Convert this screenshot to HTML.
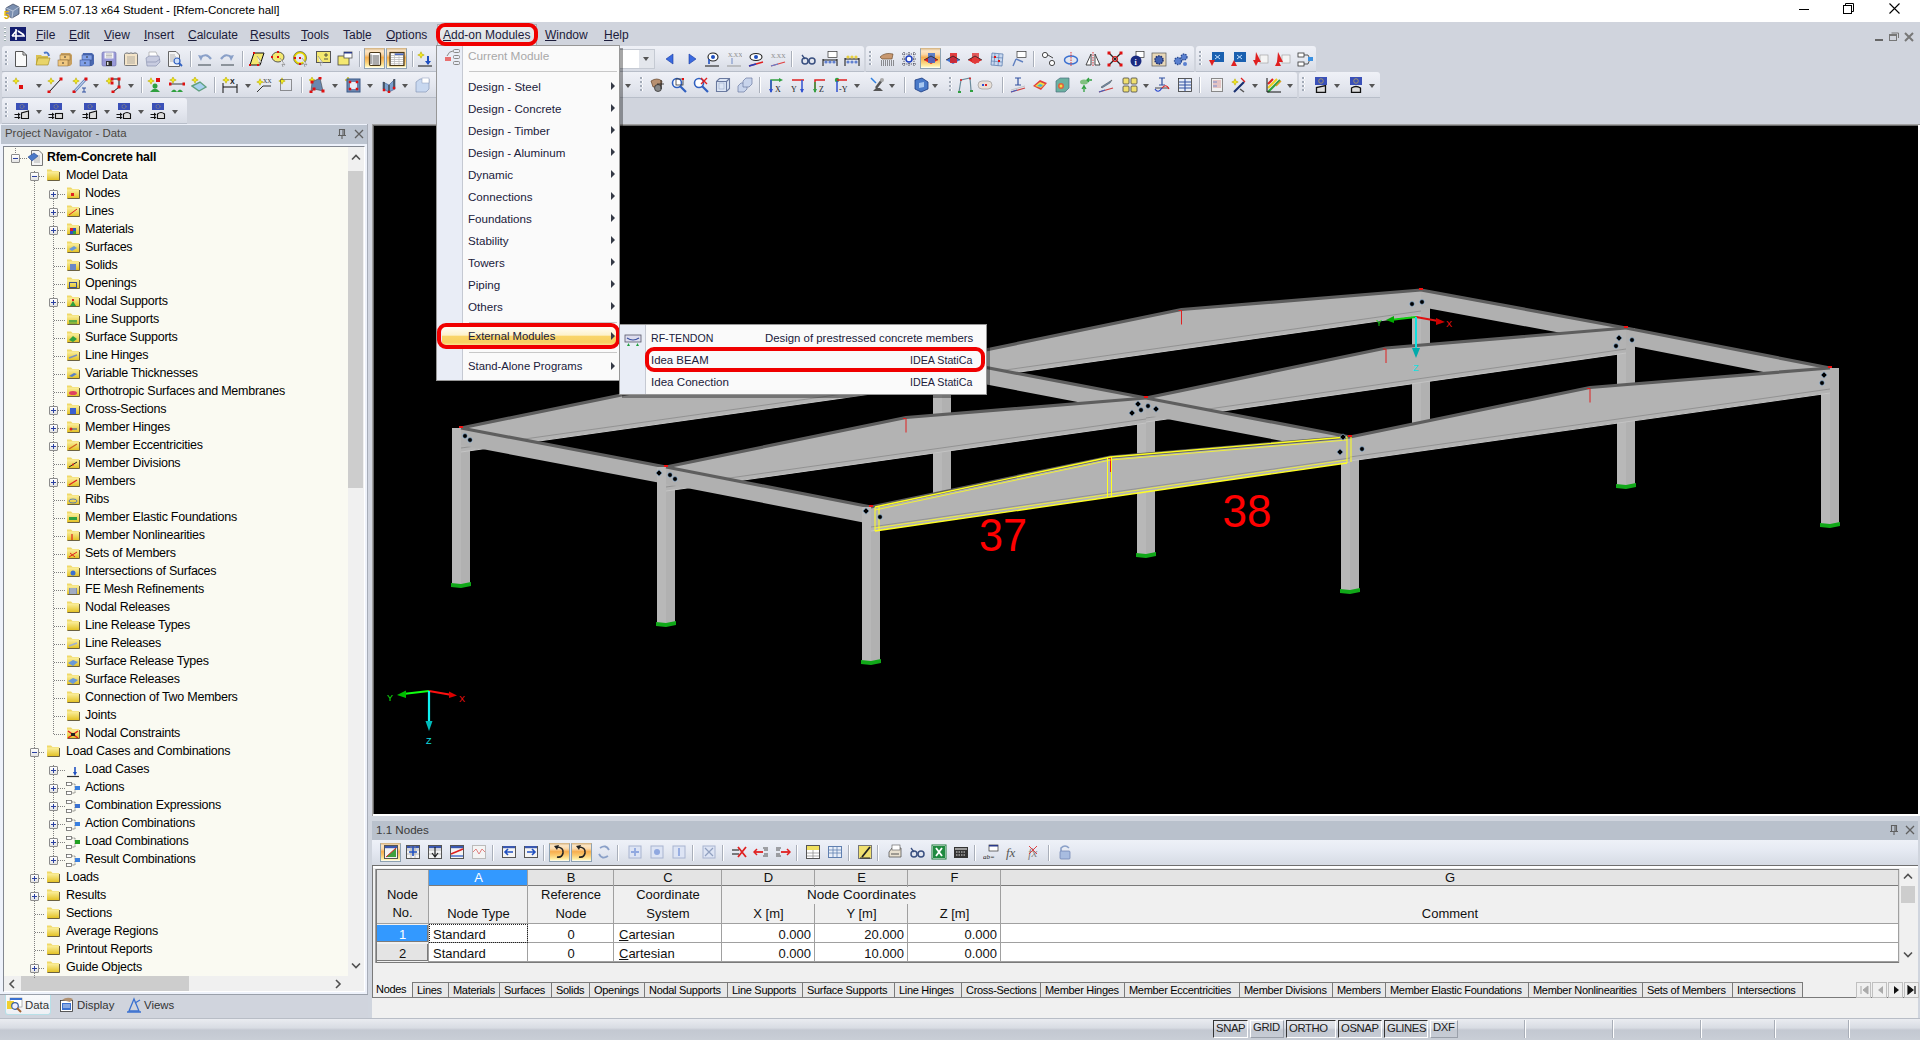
<!DOCTYPE html><html><head><meta charset="utf-8"><style>
*{margin:0;padding:0;box-sizing:border-box}
html,body{width:1920px;height:1040px;overflow:hidden;background:#d0d4dd;font-family:"Liberation Sans", sans-serif;font-size:12px;color:#1e1e1e}
.a{position:absolute}
.t{position:absolute;white-space:pre;line-height:1}
</style></head><body>

<div class="a" style="left:0;top:0;width:1920px;height:22px;background:#fff"></div>
<svg class="a" style="left:3px;top:2px" width="18" height="18" viewBox="0 0 18 18">
<path d="M3 6 L10 2 L16 5 L16 12 L9 16 L3 13Z" fill="#7a8fb0" stroke="#44506a" stroke-width="0.8"/>
<path d="M3 6 L10 9 L16 5 M10 9 L9 16" stroke="#c8d2e2" stroke-width="0.8" fill="none"/>
<text x="1" y="17" font-family="Liberation Sans" font-weight="bold" font-size="10" fill="#e0b000">5</text></svg>
<div class="t" style="left:23px;top:4px;font-size:11.6px;color:#000">RFEM 5.07.13 x64 Student - [Rfem-Concrete hall]</div>
<div class="a" style="left:1799px;top:9px;width:10px;height:1px;background:#000"></div>
<svg class="a" style="left:1843px;top:3px" width="12" height="12" viewBox="0 0 12 12"><rect x="0.5" y="2.5" width="8" height="8" fill="none" stroke="#000"/><path d="M2.5 2.5 V0.5 H10.5 V8.5 H8.5" fill="none" stroke="#000"/></svg>
<svg class="a" style="left:1889px;top:3px" width="12" height="12" viewBox="0 0 12 12"><path d="M0.5 0.5 L10.5 10.5 M10.5 0.5 L0.5 10.5" stroke="#000" stroke-width="1.1"/></svg>
<div class="a" style="left:0;top:22px;width:1920px;height:24px;background:#d0d4dd"></div>
<div class="a" style="left:4px;top:27px;width:2px;height:14px;background:repeating-linear-gradient(#fff 0 1px,#9aa 1px 2px,transparent 2px 4px)"></div>
<svg class="a" style="left:10px;top:27px" width="16" height="14" viewBox="0 0 16 14"><rect width="16" height="14" fill="#141e6e"/><path d="M2 9 H15 M6 2 V13 M2 9 L7 3 M8 4 L14 8" stroke="#fff" stroke-width="1.6"/></svg>
<div class="a" style="left:437px;top:24px;width:100px;height:22px;background:linear-gradient(#eceef0,#dcdfe3);border:1px solid #a8aeb6;border-bottom:none"></div>
<div class="t" style="left:36px;top:29px;font-size:12px;color:#1b1b3a"><span style="text-decoration:underline">F</span>ile</div>
<div class="t" style="left:69px;top:29px;font-size:12px;color:#1b1b3a"><span style="text-decoration:underline">E</span>dit</div>
<div class="t" style="left:104px;top:29px;font-size:12px;color:#1b1b3a"><span style="text-decoration:underline">V</span>iew</div>
<div class="t" style="left:144px;top:29px;font-size:12px;color:#1b1b3a"><span style="text-decoration:underline">I</span>nsert</div>
<div class="t" style="left:188px;top:29px;font-size:12px;color:#1b1b3a"><span style="text-decoration:underline">C</span>alculate</div>
<div class="t" style="left:250px;top:29px;font-size:12px;color:#1b1b3a"><span style="text-decoration:underline">R</span>esults</div>
<div class="t" style="left:301px;top:29px;font-size:12px;color:#1b1b3a"><span style="text-decoration:underline">T</span>ools</div>
<div class="t" style="left:343px;top:29px;font-size:12px;color:#1b1b3a">Tab<span style="text-decoration:underline">l</span>e</div>
<div class="t" style="left:386px;top:29px;font-size:12px;color:#1b1b3a"><span style="text-decoration:underline">O</span>ptions</div>
<div class="t" style="left:443px;top:29px;font-size:12px;color:#1b1b3a"><span style="text-decoration:underline">A</span>dd-on Modules</div>
<div class="t" style="left:545px;top:29px;font-size:12px;color:#1b1b3a"><span style="text-decoration:underline">W</span>indow</div>
<div class="t" style="left:604px;top:29px;font-size:12px;color:#1b1b3a"><span style="text-decoration:underline">H</span>elp</div>
<div class="a" style="left:1875px;top:39px;width:8px;height:2px;background:#666"></div>
<svg class="a" style="left:1889px;top:32px" width="10" height="9" viewBox="0 0 10 9"><rect x="0.5" y="2.5" width="7" height="6" fill="none" stroke="#777"/><rect x="0.5" y="2" width="7" height="2" fill="#777"/><path d="M2.5 1 H9.5 V6" fill="none" stroke="#777"/></svg>
<svg class="a" style="left:1904px;top:32px" width="10" height="10" viewBox="0 0 10 10"><path d="M1 1 L9 9 M9 1 L1 9" stroke="#777" stroke-width="2"/></svg>
<div class="a" style="left:2px;top:46px;width:862px;height:26px;background:linear-gradient(#eff1f7,#e4e7ef 55%,#d8dce5);border-bottom:1px solid #b8bec9;border-radius:3px 3px 0 0"></div>
<div class="a" style="left:866px;top:46px;width:328px;height:26px;background:linear-gradient(#eff1f7,#e4e7ef 55%,#d8dce5);border-bottom:1px solid #b8bec9;border-radius:3px 3px 0 0"></div>
<div class="a" style="left:1196px;top:46px;width:120px;height:26px;background:linear-gradient(#eff1f7,#e4e7ef 55%,#d8dce5);border-bottom:1px solid #b8bec9;border-radius:3px 3px 0 0"></div>
<div class="a" style="left:2px;top:72px;width:1295px;height:26px;background:linear-gradient(#eff1f7,#e4e7ef 55%,#d8dce5);border-bottom:1px solid #b8bec9;border-radius:3px 3px 0 0"></div>
<div class="a" style="left:1299px;top:72px;width:81px;height:26px;background:linear-gradient(#eff1f7,#e4e7ef 55%,#d8dce5);border-bottom:1px solid #b8bec9;border-radius:3px 3px 0 0"></div>
<div class="a" style="left:2px;top:98px;width:185px;height:26px;background:linear-gradient(#eff1f7,#e4e7ef 55%,#d8dce5);border-bottom:1px solid #b8bec9;border-radius:3px 3px 0 0"></div>
<div class="a" style="left:5px;top:51px;width:3px;height:16px;background:linear-gradient(90deg,#a3abb8 0 2px,#fff 2px 3px);-webkit-mask:repeating-linear-gradient(#000 0 2px,transparent 2px 4px);mask:repeating-linear-gradient(#000 0 2px,transparent 2px 4px)"></div>
<div class="a" style="left:190px;top:51px;width:1px;height:16px;background:#a9afba;box-shadow:1px 0 0 #fff"></div>
<div class="a" style="left:242px;top:51px;width:1px;height:16px;background:#a9afba;box-shadow:1px 0 0 #fff"></div>
<div class="a" style="left:359px;top:51px;width:1px;height:16px;background:#a9afba;box-shadow:1px 0 0 #fff"></div>
<div class="a" style="left:412px;top:51px;width:1px;height:16px;background:#a9afba;box-shadow:1px 0 0 #fff"></div>
<div class="a" style="left:364px;top:48px;width:21px;height:21px;background:linear-gradient(#e2c49a 0,#fde6c4 10%,#fbd8a8 28%,#f7ae4e 45%,#fbcc72 68%,#fff0a8 90%,#ffffff 100%);border:1px solid #8ea2b2;border-top-color:#d8b888"></div>
<div class="a" style="left:386px;top:48px;width:21px;height:21px;background:linear-gradient(#e2c49a 0,#fde6c4 10%,#fbd8a8 28%,#f7ae4e 45%,#fbcc72 68%,#fff0a8 90%,#ffffff 100%);border:1px solid #8ea2b2;border-top-color:#d8b888"></div>
<div class="a" style="left:600px;top:49px;width:55px;height:20px;background:#fff;border:1px solid #c5cad3"></div>
<div class="a" style="left:639px;top:50px;width:15px;height:18px;background:#e3e6ec"></div>
<div class="a" style="left:643px;top:57px;width:0;height:0;border-left:3.5px solid transparent;border-right:3.5px solid transparent;border-top:4px solid #555"></div>
<div class="a" style="left:791px;top:51px;width:1px;height:16px;background:#a9afba;box-shadow:1px 0 0 #fff"></div>
<div class="a" style="left:869px;top:51px;width:3px;height:16px;background:linear-gradient(90deg,#a3abb8 0 2px,#fff 2px 3px);-webkit-mask:repeating-linear-gradient(#000 0 2px,transparent 2px 4px);mask:repeating-linear-gradient(#000 0 2px,transparent 2px 4px)"></div>
<div class="a" style="left:920px;top:48px;width:21px;height:21px;background:linear-gradient(#e2c49a 0,#fde6c4 10%,#fbd8a8 28%,#f7ae4e 45%,#fbcc72 68%,#fff0a8 90%,#ffffff 100%);border:1px solid #8ea2b2;border-top-color:#d8b888"></div>
<div class="a" style="left:1033px;top:51px;width:1px;height:16px;background:#a9afba;box-shadow:1px 0 0 #fff"></div>
<div class="a" style="left:1199px;top:51px;width:3px;height:16px;background:linear-gradient(90deg,#a3abb8 0 2px,#fff 2px 3px);-webkit-mask:repeating-linear-gradient(#000 0 2px,transparent 2px 4px);mask:repeating-linear-gradient(#000 0 2px,transparent 2px 4px)"></div>
<svg class="a" style="left:13px;top:51px" width="16" height="16" viewBox="0 0 16 16"><path d="M2.5 0.5 H10 L13.5 4 V15.5 H2.5Z" fill="#fafafa" stroke="#555"/><path d="M10 0.5 V4 H13.5" fill="none" stroke="#555"/></svg>
<svg class="a" style="left:35px;top:51px" width="16" height="16" viewBox="0 0 16 16"><path d="M1 4 H6 L7 5 H13 V14 H1Z" fill="#d9c050"/><path d="M1 14 L3 7 H15 L13 14Z" fill="#e8d46a" stroke="#9a8420" stroke-width="0.6"/><path d="M9 2 Q13 0 14 5" stroke="#4a78c8" stroke-width="2" fill="none"/></svg>
<svg class="a" style="left:57px;top:51px" width="16" height="16" viewBox="0 0 16 16"><path d="M4 2 H13 L15 4 V13 L13 15 H3 V6Z" fill="#c8a060"/><rect x="3" y="4" width="10" height="5" fill="#f0c880" stroke="#806030" stroke-width="0.5"/><rect x="1" y="9" width="10" height="6" fill="#f0c880" stroke="#806030" stroke-width="0.5"/><circle cx="8" cy="6" r="0.8" fill="#222"/><circle cx="6" cy="12" r="0.8" fill="#222"/></svg>
<svg class="a" style="left:79px;top:51px" width="16" height="16" viewBox="0 0 16 16"><path d="M4 2 H13 L15 4 V13 L13 15 H3 V6Z" fill="#4a68b0"/><rect x="3" y="4" width="10" height="5" fill="#80a0e8" stroke="#304888" stroke-width="0.5"/><rect x="1" y="9" width="10" height="6" fill="#80a0e8" stroke="#304888" stroke-width="0.5"/><circle cx="8" cy="6" r="0.8" fill="#222"/><circle cx="6" cy="12" r="0.8" fill="#222"/></svg>
<svg class="a" style="left:101px;top:51px" width="16" height="16" viewBox="0 0 16 16"><rect x="1" y="1" width="14" height="14" rx="1.5" fill="#9a9ad8" stroke="#6a6aa8" stroke-width="0.6"/><rect x="3.5" y="1.5" width="9" height="6" fill="#f4f4f4"/><path d="M5 3 H11 M5 4.5 H11 M5 6 H11" stroke="#888" stroke-width="0.5"/><rect x="5" y="10" width="6" height="5" fill="#333"/><rect x="6" y="11" width="1.5" height="3" fill="#ddd"/></svg>
<svg class="a" style="left:123px;top:51px" width="16" height="16" viewBox="0 0 16 16"><rect x="1.5" y="2.5" width="13" height="12" rx="1" fill="#f4e4c8" stroke="#777"/><path d="M2 2.5 Q4 0.5 6 2.5 Q8 0.5 10 2.5 Q12 0.5 14 2.5" fill="#ddd" stroke="#777" stroke-width="0.6"/><path d="M4 6 H12 M4 8 H12 M4 10 H12 M4 12 H12" stroke="#888" stroke-width="0.6"/></svg>
<svg class="a" style="left:145px;top:51px" width="16" height="16" viewBox="0 0 16 16"><path d="M4 1 H11 L13 6 H4Z" fill="#fff" stroke="#999" stroke-width="0.6"/><path d="M1 7 L4 5 H14 L15 11 L11 15 H2Z" fill="#c8cce0" stroke="#8088a8" stroke-width="0.6"/><path d="M2 11 H11 L15 8" stroke="#8088a8" stroke-width="0.6" fill="none"/></svg>
<svg class="a" style="left:167px;top:51px" width="16" height="16" viewBox="0 0 16 16"><path d="M1.5 0.5 H9 L12.5 4 V15.5 H1.5Z" fill="#f4f4f4" stroke="#666"/><path d="M3 4 H8 M3 6 H9 M3 8 H7 M3 10 H6" stroke="#888" stroke-width="0.6"/><circle cx="10" cy="10" r="3" fill="#cfe0f8" stroke="#3060c0" stroke-width="1.2"/><path d="M12 12 L15 15" stroke="#3060c0" stroke-width="1.8"/></svg>
<svg class="a" style="left:197px;top:51px" width="16" height="16" viewBox="0 0 16 16"><path d="M3 7 Q9 1 14 8" stroke="#8aa0c8" stroke-width="2.2" fill="none"/><path d="M1 4 L4 10 L6 5Z" fill="#8aa0c8"/><path d="M1 14 H14" stroke="#707880" stroke-width="1.5"/></svg>
<svg class="a" style="left:219px;top:51px" width="16" height="16" viewBox="0 0 16 16"><path d="M13 7 Q7 1 2 8" stroke="#8aa0c8" stroke-width="2.2" fill="none"/><path d="M15 4 L12 10 L10 5Z" fill="#8aa0c8"/><path d="M2 14 H15" stroke="#707880" stroke-width="1.5"/></svg>
<svg class="a" style="left:249px;top:51px" width="16" height="16" viewBox="0 0 16 16"><path d="M1 14 L5 2 H15 L11 14Z" fill="#f4e870" stroke="#111" stroke-width="1"/><rect x="4.0" y="1.0" width="2" height="2" fill="#e01010"/><rect x="0.0" y="13.0" width="2" height="2" fill="#e01010"/><rect x="8.0" y="13.0" width="2" height="2" fill="#e01010"/><path d="M8 5 L13 12 L10 11 L11 15" fill="#eee" stroke="#777" stroke-width="0.6"/></svg>
<svg class="a" style="left:271px;top:51px" width="16" height="16" viewBox="0 0 16 16"><ellipse cx="7" cy="6" rx="6" ry="5" fill="#f4e870" stroke="#333" stroke-width="0.8"/><rect x="0.0" y="5.0" width="2" height="2" fill="#e01010"/><rect x="6.0" y="0.0" width="2" height="2" fill="#e01010"/><rect x="6.0" y="5.0" width="2" height="2" fill="#e01010"/><path d="M9 7 L14 14 L11 13 L12 16" fill="#eee" stroke="#777" stroke-width="0.6"/></svg>
<svg class="a" style="left:293px;top:51px" width="16" height="16" viewBox="0 0 16 16"><circle cx="7" cy="7" r="5.5" fill="none" stroke="#e8d800" stroke-width="2"/><circle cx="7" cy="7" r="6.5" fill="none" stroke="#222" stroke-width="0.5"/><rect x="6.0" y="6.0" width="2" height="2" fill="#e01010"/><rect x="1.0" y="6.0" width="2" height="2" fill="#e01010"/><rect x="6.0" y="12.0" width="2" height="2" fill="#e01010"/><path d="M9 7 L14 14 L11 13 L12 16" fill="#eee" stroke="#777" stroke-width="0.6"/></svg>
<svg class="a" style="left:315px;top:51px" width="16" height="16" viewBox="0 0 16 16"><rect x="1.5" y="0.5" width="14" height="11" fill="#f4e870" stroke="#555"/><path d="M9 4 H13 M11 2 V6 M9 8 H13" stroke="#333" stroke-width="0.8"/><path d="M3 5 L8 12 L5 11 L6 15" fill="#eee" stroke="#777" stroke-width="0.6"/></svg>
<svg class="a" style="left:337px;top:51px" width="16" height="16" viewBox="0 0 16 16"><rect x="1" y="5" width="11" height="9" fill="#f4e870" stroke="#444" stroke-width="0.8"/><rect x="7" y="1" width="8" height="6" fill="#fff" stroke="#555" stroke-width="0.8"/><rect x="7" y="1" width="8" height="1.5" fill="#2a3a8a"/></svg>
<svg class="a" style="left:367px;top:51px" width="16" height="16" viewBox="0 0 16 16"><rect x="2.5" y="1.5" width="11" height="13" rx="1.2" fill="#fff" stroke="#4a3818" stroke-width="1.2"/><path d="M5.5 5 H12 M5.5 7 H12 M5.5 9 H12 M5.5 11 H12 M5.5 13 H12" stroke="#444" stroke-width="0.9"/><path d="M4 3.5 V13" stroke="#333" stroke-width="0.8"/></svg>
<svg class="a" style="left:389px;top:51px" width="16" height="16" viewBox="0 0 16 16"><rect x="1" y="1.5" width="14" height="13" fill="#c8c8c8" stroke="#4a3818" stroke-width="1.2"/><rect x="2" y="2.5" width="3" height="1.5" fill="#fff"/><rect x="6" y="2.5" width="8.5" height="1.5" fill="#4a68c0"/><path d="M2 5.5 H14 M2 7.5 H14 M2 9.5 H14 M2 11.5 H14 M2 13.3 H14" stroke="#fff" stroke-width="1"/><path d="M5.5 5 V14 M10 5 V14" stroke="#bbb" stroke-width="0.7"/></svg>
<svg class="a" style="left:417px;top:51px" width="16" height="16" viewBox="0 0 16 16"><path d="M4 0.7999999999999998 L4.9 3.1 L7.2 4 L4.9 4.9 L4 7.2 L3.1 4.9 L0.7999999999999998 4 L3.1 3.1Z" fill="#f6f020" stroke="#b8a800" stroke-width="0.6"/><path d="M11 5 V13" stroke="#2050c0" stroke-width="2"/><path d="M8 10 L11 14 L14 10Z" fill="#2050c0"/><path d="M1 15 H15" stroke="#333" stroke-width="1.2"/></svg>
<svg class="a" style="left:662px;top:51px" width="16" height="16" viewBox="0 0 16 16"><path d="M11 3 L4 8 L11 13Z" fill="#3a6ae0" stroke="#1a3aa0" stroke-width="0.6"/></svg>
<svg class="a" style="left:684px;top:51px" width="16" height="16" viewBox="0 0 16 16"><path d="M5 3 L12 8 L5 13Z" fill="#3a6ae0" stroke="#1a3aa0" stroke-width="0.6"/></svg>
<svg class="a" style="left:704px;top:51px" width="16" height="16" viewBox="0 0 16 16"><ellipse cx="9" cy="6" rx="5" ry="4" fill="#fff" stroke="#222" stroke-width="1.1"/><circle cx="9" cy="6" r="2" fill="#2050c0"/><path d="M5 8 V13" stroke="#2050c0" stroke-width="1.6"/><path d="M1 15 H15" stroke="#333" stroke-width="1.2"/></svg>
<svg class="a" style="left:726px;top:51px" width="16" height="16" viewBox="0 0 16 16"><text x="2" y="6" font-size="6" fill="#888" font-family="Liberation Serif">X.XX</text><path d="M6 7 V13" stroke="#8aa0d0" stroke-width="1.3"/><path d="M1 15 H15" stroke="#999" stroke-width="1"/></svg>
<svg class="a" style="left:748px;top:51px" width="16" height="16" viewBox="0 0 16 16"><ellipse cx="8" cy="6" rx="6" ry="3.5" fill="#fff" stroke="#222" stroke-width="1.1"/><circle cx="8" cy="6" r="2" fill="#2050c0"/><path d="M1 15 L15 11" stroke="#e02020" stroke-width="1.5"/><path d="M1 15 L8 13" stroke="#2040c0" stroke-width="1.5"/></svg>
<svg class="a" style="left:770px;top:51px" width="16" height="16" viewBox="0 0 16 16"><text x="1" y="7" font-size="6" fill="#888" font-family="Liberation Serif">X.XX</text><path d="M1 15 L15 11" stroke="#e04040" stroke-width="1.2"/><path d="M1 15 L8 13" stroke="#6080d0" stroke-width="1.2"/></svg>
<svg class="a" style="left:800px;top:51px" width="16" height="16" viewBox="0 0 16 16"><circle cx="5" cy="10" r="3" fill="none" stroke="#3a5080" stroke-width="1.5"/><circle cx="12" cy="10" r="3" fill="none" stroke="#3a5080" stroke-width="1.5"/><path d="M2 4 L5 8 M8 10 H9" stroke="#3a5080" stroke-width="1.3"/></svg>
<svg class="a" style="left:822px;top:51px" width="16" height="16" viewBox="0 0 16 16"><rect x="6" y="0.5" width="9" height="6" fill="#fff" stroke="#333" stroke-width="0.7"/><path d="M1 9 H15 M1 8 V15 M15 8 V15" stroke="#111" stroke-width="1"/><circle cx="4" cy="11" r="1.6" fill="#6080d0"/><circle cx="8" cy="11" r="1.6" fill="#6080d0"/><circle cx="12" cy="11" r="1.6" fill="#6080d0"/></svg>
<svg class="a" style="left:844px;top:51px" width="16" height="16" viewBox="0 0 16 16"><path d="M1 8 H15 M1 7 V15 M15 7 V15" stroke="#111" stroke-width="1"/><circle cx="4" cy="6" r="1.6" fill="#e8d040"/><circle cx="8" cy="6" r="1.6" fill="#e8d040"/><circle cx="12" cy="6" r="1.6" fill="#e8d040"/><circle cx="4" cy="11" r="1.6" fill="#6080d0"/><circle cx="8" cy="11" r="1.6" fill="#6080d0"/><circle cx="12" cy="11" r="1.6" fill="#6080d0"/></svg>
<svg class="a" style="left:879px;top:51px" width="16" height="16" viewBox="0 0 16 16"><path d="M1 6 Q6 1 14 3 L13 8 H3Z" fill="#c89870" stroke="#604020" stroke-width="0.6"/><path d="M2 10 H15 M2 12 H15 M2 14 H15" stroke="#333" stroke-width="1" stroke-dasharray="1 1"/></svg>
<svg class="a" style="left:901px;top:51px" width="16" height="16" viewBox="0 0 16 16"><path d="M1 3 H15 M1 8 H15 M1 13 H15 M3 1 V15 M8 1 V15 M13 1 V15" stroke="#223" stroke-width="0.9" stroke-dasharray="1 1.2"/><circle cx="8" cy="8" r="3" fill="#fff" stroke="#2040c0" stroke-width="1.5"/></svg>
<svg class="a" style="left:923px;top:51px" width="16" height="16" viewBox="0 0 16 16"><path d="M1 9 L8 5 L15 9 L8 13Z" fill="#e02020"/><path d="M5 2 H12 V12 H5Z" fill="#4070d0" opacity="0.85"/><path d="M1 9 L8 5 L15 9" stroke="#222" stroke-width="0.8" fill="none"/></svg>
<svg class="a" style="left:945px;top:51px" width="16" height="16" viewBox="0 0 16 16"><path d="M1 9 L8 5 L15 9 L8 13Z" fill="#4070d0"/><path d="M5 2 H12 V12 H5Z" fill="#e02020" opacity="0.85"/><path d="M1 9 L8 5 L15 9" stroke="#222" stroke-width="0.8" fill="none"/></svg>
<svg class="a" style="left:967px;top:51px" width="16" height="16" viewBox="0 0 16 16"><path d="M1 9 L8 5 L15 9 L8 13Z" fill="#e02020"/><path d="M5 2 H12 V12 H5Z" fill="#e04040" opacity="0.85"/><path d="M1 9 L8 5 L15 9" stroke="#222" stroke-width="0.8" fill="none"/></svg>
<svg class="a" style="left:989px;top:51px" width="16" height="16" viewBox="0 0 16 16"><path d="M3 2 L14 3 L13 15 L2 14Z" fill="#c8d8f0" stroke="#6080b0" stroke-width="0.8"/><path d="M6 2 L5 14 M10 3 L9 15 M2 6 L14 7 M2 10 L13 11" stroke="#6080b0" stroke-width="0.7"/><rect x="5.0" y="5.0" width="2" height="2" fill="#e01010"/><rect x="9.0" y="9.0" width="2" height="2" fill="#e01010"/></svg>
<svg class="a" style="left:1011px;top:51px" width="16" height="16" viewBox="0 0 16 16"><rect x="6" y="0.5" width="9" height="6" fill="#fff" stroke="#333" stroke-width="0.7"/><path d="M5 8 L2 15 M5 8 L12 11" stroke="#6080c0" stroke-width="1.4"/></svg>
<svg class="a" style="left:1041px;top:51px" width="16" height="16" viewBox="0 0 16 16"><circle cx="4" cy="4" r="2.6" fill="#fff" stroke="#333" stroke-width="0.9"/><circle cx="11" cy="12" r="2.6" fill="#fff" stroke="#333" stroke-width="0.9"/><path d="M7 4 L12 7" stroke="#333" stroke-width="0.9"/></svg>
<svg class="a" style="left:1063px;top:51px" width="16" height="16" viewBox="0 0 16 16"><ellipse cx="8" cy="9" rx="6.5" ry="4" fill="none" stroke="#3a70d0" stroke-width="1.5"/><path d="M8 1 V16" stroke="#e02020" stroke-width="0.9" stroke-dasharray="1.5 1"/></svg>
<svg class="a" style="left:1085px;top:51px" width="16" height="16" viewBox="0 0 16 16"><path d="M1 14 L6 3 V14Z M15 14 L10 3 V14Z" fill="#fff" stroke="#333" stroke-width="0.9"/><path d="M8 1 V16" stroke="#e02020" stroke-width="0.9" stroke-dasharray="1.5 1"/></svg>
<svg class="a" style="left:1107px;top:51px" width="16" height="16" viewBox="0 0 16 16"><path d="M2 2 L14 14 M14 2 L2 14" stroke="#222" stroke-width="1.3"/><circle cx="8" cy="8" r="2.5" fill="none" stroke="#e02020" stroke-width="1.2"/><rect x="0.5" y="0.5" width="3" height="3" fill="#e01010"/><rect x="12.5" y="0.5" width="3" height="3" fill="#e01010"/><rect x="0.5" y="12.5" width="3" height="3" fill="#e01010"/><rect x="12.5" y="12.5" width="3" height="3" fill="#e01010"/></svg>
<svg class="a" style="left:1129px;top:51px" width="16" height="16" viewBox="0 0 16 16"><rect x="7" y="0.5" width="8" height="6" fill="#fff" stroke="#333" stroke-width="0.7"/><circle cx="7" cy="10" r="5.5" fill="#1a2a80"/><text x="5.6" y="13.5" font-size="8" font-weight="bold" fill="#fff" font-family="Liberation Serif">i</text></svg>
<svg class="a" style="left:1151px;top:51px" width="16" height="16" viewBox="0 0 16 16"><rect x="1" y="2" width="14" height="13" fill="#e8d8b8" stroke="#555" stroke-width="0.7"/><circle cx="8" cy="9" r="4" fill="#4060b0" stroke="#203070" stroke-width="1.6" stroke-dasharray="1.5 1"/></svg>
<svg class="a" style="left:1173px;top:51px" width="16" height="16" viewBox="0 0 16 16"><circle cx="5" cy="10" r="3.5" fill="#5a80d0" stroke="#2a4a90" stroke-width="1.3" stroke-dasharray="1.5 1"/><circle cx="11" cy="6" r="3" fill="#5a80d0" stroke="#2a4a90" stroke-width="1.3" stroke-dasharray="1.5 1"/><circle cx="12" cy="13" r="2" fill="#5a80d0"/></svg>
<svg class="a" style="left:1209px;top:51px" width="16" height="16" viewBox="0 0 16 16"><rect x="3" y="1" width="12" height="10" fill="#1a60b0"/><path d="M6 4 L11 8 M11 4 L6 8" stroke="#c0e0ff" stroke-width="1"/><path d="M0 9 L6 9 L3 15Z" fill="#e02020"/></svg>
<svg class="a" style="left:1231px;top:51px" width="16" height="16" viewBox="0 0 16 16"><rect x="3" y="1" width="12" height="10" fill="#1a60b0"/><path d="M6 4 L11 8 M11 4 L6 8" stroke="#c0e0ff" stroke-width="1"/><path d="M0 15 L6 15 L3 9Z" fill="#e02020"/></svg>
<svg class="a" style="left:1253px;top:51px" width="16" height="16" viewBox="0 0 16 16"><rect x="7" y="4" width="8" height="8" fill="#f4f4f4" stroke="#999" stroke-width="0.6"/><path d="M3 1 L8 11 H2Z" fill="#e02020"/><path d="M0 9 L6 9 L3 15Z" fill="#e02020"/></svg>
<svg class="a" style="left:1275px;top:51px" width="16" height="16" viewBox="0 0 16 16"><rect x="7" y="4" width="8" height="8" fill="#f4f4f4" stroke="#999" stroke-width="0.6"/><path d="M3 1 L8 11 H2Z" fill="#e02020"/><path d="M0 15 L6 15 L3 9Z" fill="#e02020"/></svg>
<svg class="a" style="left:1297px;top:51px" width="16" height="16" viewBox="0 0 16 16"><rect x="1" y="2" width="6" height="4" fill="#fff" stroke="#333" stroke-width="0.8"/><rect x="1" y="11" width="6" height="4" fill="#fff" stroke="#333" stroke-width="0.8"/><path d="M7 4 H11 L13 8 L11 13 H7" stroke="#333" fill="none" stroke-width="0.8"/><rect x="11" y="6" width="5" height="4" fill="#3a90e0"/></svg>
<div class="a" style="left:5px;top:77px;width:3px;height:16px;background:linear-gradient(90deg,#a3abb8 0 2px,#fff 2px 3px);-webkit-mask:repeating-linear-gradient(#000 0 2px,transparent 2px 4px);mask:repeating-linear-gradient(#000 0 2px,transparent 2px 4px)"></div>
<div class="a" style="left:36px;top:84px;width:0;height:0;border-left:3.5px solid transparent;border-right:3.5px solid transparent;border-top:4px solid #555"></div>
<div class="a" style="left:93px;top:84px;width:0;height:0;border-left:3.5px solid transparent;border-right:3.5px solid transparent;border-top:4px solid #555"></div>
<div class="a" style="left:128px;top:84px;width:0;height:0;border-left:3.5px solid transparent;border-right:3.5px solid transparent;border-top:4px solid #555"></div>
<div class="a" style="left:245px;top:84px;width:0;height:0;border-left:3.5px solid transparent;border-right:3.5px solid transparent;border-top:4px solid #555"></div>
<div class="a" style="left:332px;top:84px;width:0;height:0;border-left:3.5px solid transparent;border-right:3.5px solid transparent;border-top:4px solid #555"></div>
<div class="a" style="left:367px;top:84px;width:0;height:0;border-left:3.5px solid transparent;border-right:3.5px solid transparent;border-top:4px solid #555"></div>
<div class="a" style="left:402px;top:84px;width:0;height:0;border-left:3.5px solid transparent;border-right:3.5px solid transparent;border-top:4px solid #555"></div>
<div class="a" style="left:625px;top:84px;width:0;height:0;border-left:3.5px solid transparent;border-right:3.5px solid transparent;border-top:4px solid #555"></div>
<div class="a" style="left:854px;top:84px;width:0;height:0;border-left:3.5px solid transparent;border-right:3.5px solid transparent;border-top:4px solid #555"></div>
<div class="a" style="left:889px;top:84px;width:0;height:0;border-left:3.5px solid transparent;border-right:3.5px solid transparent;border-top:4px solid #555"></div>
<div class="a" style="left:932px;top:84px;width:0;height:0;border-left:3.5px solid transparent;border-right:3.5px solid transparent;border-top:4px solid #555"></div>
<div class="a" style="left:1143px;top:84px;width:0;height:0;border-left:3.5px solid transparent;border-right:3.5px solid transparent;border-top:4px solid #555"></div>
<div class="a" style="left:1252px;top:84px;width:0;height:0;border-left:3.5px solid transparent;border-right:3.5px solid transparent;border-top:4px solid #555"></div>
<div class="a" style="left:1287px;top:84px;width:0;height:0;border-left:3.5px solid transparent;border-right:3.5px solid transparent;border-top:4px solid #555"></div>
<div class="a" style="left:1334px;top:84px;width:0;height:0;border-left:3.5px solid transparent;border-right:3.5px solid transparent;border-top:4px solid #555"></div>
<div class="a" style="left:1369px;top:84px;width:0;height:0;border-left:3.5px solid transparent;border-right:3.5px solid transparent;border-top:4px solid #555"></div>
<div class="a" style="left:141px;top:77px;width:1px;height:16px;background:#a9afba;box-shadow:1px 0 0 #fff"></div>
<div class="a" style="left:214px;top:77px;width:1px;height:16px;background:#a9afba;box-shadow:1px 0 0 #fff"></div>
<div class="a" style="left:301px;top:77px;width:1px;height:16px;background:#a9afba;box-shadow:1px 0 0 #fff"></div>
<div class="a" style="left:759px;top:77px;width:1px;height:16px;background:#a9afba;box-shadow:1px 0 0 #fff"></div>
<div class="a" style="left:904px;top:77px;width:1px;height:16px;background:#a9afba;box-shadow:1px 0 0 #fff"></div>
<div class="a" style="left:1002px;top:77px;width:1px;height:16px;background:#a9afba;box-shadow:1px 0 0 #fff"></div>
<div class="a" style="left:1199px;top:77px;width:1px;height:16px;background:#a9afba;box-shadow:1px 0 0 #fff"></div>
<div class="a" style="left:640px;top:77px;width:3px;height:16px;background:linear-gradient(90deg,#a3abb8 0 2px,#fff 2px 3px);-webkit-mask:repeating-linear-gradient(#000 0 2px,transparent 2px 4px);mask:repeating-linear-gradient(#000 0 2px,transparent 2px 4px)"></div>
<div class="a" style="left:949px;top:77px;width:3px;height:16px;background:linear-gradient(90deg,#a3abb8 0 2px,#fff 2px 3px);-webkit-mask:repeating-linear-gradient(#000 0 2px,transparent 2px 4px);mask:repeating-linear-gradient(#000 0 2px,transparent 2px 4px)"></div>
<div class="a" style="left:1302px;top:77px;width:3px;height:16px;background:linear-gradient(90deg,#a3abb8 0 2px,#fff 2px 3px);-webkit-mask:repeating-linear-gradient(#000 0 2px,transparent 2px 4px);mask:repeating-linear-gradient(#000 0 2px,transparent 2px 4px)"></div>
<svg class="a" style="left:12px;top:77px" width="16" height="16" viewBox="0 0 16 16"><path d="M4 0.7999999999999998 L4.9 3.1 L7.2 4 L4.9 4.9 L4 7.2 L3.1 4.9 L0.7999999999999998 4 L3.1 3.1Z" fill="#f6f020" stroke="#b8a800" stroke-width="0.6"/><rect x="7.0" y="8.0" width="4" height="4" fill="#e01010"/></svg>
<svg class="a" style="left:47px;top:77px" width="16" height="16" viewBox="0 0 16 16"><path d="M4 0.7999999999999998 L4.9 3.1 L7.2 4 L4.9 4.9 L4 7.2 L3.1 4.9 L0.7999999999999998 4 L3.1 3.1Z" fill="#f6f020" stroke="#b8a800" stroke-width="0.6"/><path d="M2 15 L14 2" stroke="#111" stroke-width="1"/><rect x="0.5" y="13.5" width="3" height="3" fill="#e01010"/><rect x="12.5" y="0.5" width="3" height="3" fill="#e01010"/></svg>
<svg class="a" style="left:72px;top:77px" width="16" height="16" viewBox="0 0 16 16"><path d="M4 0.7999999999999998 L4.9 3.1 L7.2 4 L4.9 4.9 L4 7.2 L3.1 4.9 L0.7999999999999998 4 L3.1 3.1Z" fill="#f6f020" stroke="#b8a800" stroke-width="0.6"/><path d="M2 15 L14 2" stroke="#6a8ac0" stroke-width="2.6"/><path d="M2 15 L14 2" stroke="#dfe8f8" stroke-width="1"/><rect x="0.5" y="13.5" width="3" height="3" fill="#e01010"/><rect x="12.5" y="0.5" width="3" height="3" fill="#e01010"/><path d="M10 11 H14 M12 11 V15 M10 15 H14" stroke="#3050a0" stroke-width="1"/></svg>
<svg class="a" style="left:106px;top:77px" width="16" height="16" viewBox="0 0 16 16"><path d="M3 0.7999999999999998 L3.9 3.1 L6.2 4 L3.9 4.9 L3 7.2 L2.1 4.9 L-0.20000000000000018 4 L2.1 3.1Z" fill="#f6f020" stroke="#b8a800" stroke-width="0.6"/><path d="M6 2 H13 V10 L7 15" stroke="#111" stroke-width="1" fill="none"/><rect x="4.5" y="0.5" width="3" height="3" fill="#e01010"/><rect x="11.5" y="0.5" width="3" height="3" fill="#e01010"/><rect x="4.5" y="4.5" width="3" height="3" fill="#e01010"/><rect x="11.5" y="8.5" width="3" height="3" fill="#e01010"/><rect x="5.5" y="13.5" width="3" height="3" fill="#e01010"/></svg>
<svg class="a" style="left:147px;top:77px" width="16" height="16" viewBox="0 0 16 16"><path d="M4 0.7999999999999998 L4.9 3.1 L7.2 4 L4.9 4.9 L4 7.2 L3.1 4.9 L0.7999999999999998 4 L3.1 3.1Z" fill="#f6f020" stroke="#b8a800" stroke-width="0.6"/><rect x="9.0" y="1.0" width="4" height="4" fill="#e01010"/><path d="M3 15 Q8 8 13 15Z" fill="#30a040"/><circle cx="8" cy="9" r="2.5" fill="#30a040"/></svg>
<svg class="a" style="left:169px;top:77px" width="16" height="16" viewBox="0 0 16 16"><path d="M4 -0.20000000000000018 L4.9 2.1 L7.2 3 L4.9 3.9 L4 6.2 L3.1 3.9 L0.7999999999999998 3 L3.1 2.1Z" fill="#f6f020" stroke="#b8a800" stroke-width="0.6"/><path d="M1 7 H15" stroke="#111" stroke-width="0.8"/><rect x="-0.5" y="5.5" width="3" height="3" fill="#e01010"/><rect x="13.5" y="5.5" width="3" height="3" fill="#e01010"/><path d="M2 15 Q5 10 8 15Z M8 15 Q11 10 14 15Z" fill="#30a040"/></svg>
<svg class="a" style="left:191px;top:77px" width="16" height="16" viewBox="0 0 16 16"><path d="M4 -0.20000000000000018 L4.9 2.1 L7.2 3 L4.9 3.9 L4 6.2 L3.1 3.9 L0.7999999999999998 3 L3.1 2.1Z" fill="#f6f020" stroke="#b8a800" stroke-width="0.6"/><path d="M1 9 L9 5 L15 10 L8 14Z" fill="#a8d0f0" stroke="#60a080" stroke-width="1.4"/></svg>
<svg class="a" style="left:222px;top:77px" width="16" height="16" viewBox="0 0 16 16"><path d="M4 -0.20000000000000018 L4.9 2.1 L7.2 3 L4.9 3.9 L4 6.2 L3.1 3.9 L0.7999999999999998 3 L3.1 2.1Z" fill="#f6f020" stroke="#b8a800" stroke-width="0.6"/><text x="8" y="7" font-size="7" font-weight="bold" fill="#111">X</text><path d="M1 6 V16 M15 7 V16 M1 10 H15" stroke="#111" stroke-width="1"/></svg>
<svg class="a" style="left:256px;top:77px" width="16" height="16" viewBox="0 0 16 16"><path d="M4 1.7999999999999998 L4.9 4.1 L7.2 5 L4.9 5.9 L4 8.2 L3.1 5.9 L0.7999999999999998 5 L3.1 4.1Z" fill="#f6f020" stroke="#b8a800" stroke-width="0.6"/><text x="7" y="6" font-size="6" fill="#333" font-family="Liberation Serif">XX</text><path d="M7 9 H15 M7 9 L1 15" stroke="#333" stroke-width="1"/></svg>
<svg class="a" style="left:278px;top:77px" width="16" height="16" viewBox="0 0 16 16"><path d="M4 0.7999999999999998 L4.9 3.1 L7.2 4 L4.9 4.9 L4 7.2 L3.1 4.9 L0.7999999999999998 4 L3.1 3.1Z" fill="#f6f020" stroke="#b8a800" stroke-width="0.6"/><rect x="2.5" y="2.5" width="11" height="11" fill="none" stroke="#333" stroke-dasharray="1 1"/></svg>
<svg class="a" style="left:309px;top:77px" width="16" height="16" viewBox="0 0 16 16"><path d="M3 0 L3.9 2.1 L6 3 L3.9 3.9 L3 6 L2.1 3.9 L0 3 L2.1 2.1Z" fill="#f6f020" stroke="#b8a800" stroke-width="0.6"/><path d="M3 5 L11 1 L14 14 L5 12 L2 15Z" fill="#6a88b0" stroke="#333" stroke-width="0.5"/><rect x="1.5" y="3.5" width="3" height="3" fill="#e01010"/><rect x="9.5" y="-0.5" width="3" height="3" fill="#e01010"/><rect x="12.5" y="12.5" width="3" height="3" fill="#e01010"/><rect x="3.5" y="10.5" width="3" height="3" fill="#e01010"/><rect x="0.5" y="13.5" width="3" height="3" fill="#e01010"/></svg>
<svg class="a" style="left:345px;top:77px" width="16" height="16" viewBox="0 0 16 16"><path d="M3 0 L3.9 2.1 L6 3 L3.9 3.9 L3 6 L2.1 3.9 L0 3 L2.1 2.1Z" fill="#f6f020" stroke="#b8a800" stroke-width="0.6"/><rect x="2" y="2" width="13" height="13" fill="#6a88b0" stroke="#3a5888"/><rect x="5" y="5" width="7" height="7" fill="#e8eef8"/><rect x="3.75" y="3.75" width="2.5" height="2.5" fill="#e01010"/><rect x="10.75" y="3.75" width="2.5" height="2.5" fill="#e01010"/><rect x="3.75" y="10.75" width="2.5" height="2.5" fill="#e01010"/><rect x="10.75" y="10.75" width="2.5" height="2.5" fill="#e01010"/></svg>
<svg class="a" style="left:381px;top:77px" width="16" height="16" viewBox="0 0 16 16"><path d="M2 5 L8 8 L14 2 V12 L8 15 L2 12Z" fill="#7aa0d0" stroke="#3a5888" stroke-width="0.6"/><path d="M3 13 V5 M8 15 V8 M13 11 V2" stroke="#333" stroke-width="1.2"/><rect x="1.75" y="11.75" width="2.5" height="2.5" fill="#e01010"/><rect x="6.75" y="13.75" width="2.5" height="2.5" fill="#e01010"/><rect x="11.75" y="9.75" width="2.5" height="2.5" fill="#e01010"/></svg>
<svg class="a" style="left:414px;top:77px" width="16" height="16" viewBox="0 0 16 16"><path d="M2 5 L6 2 H15 V12 L12 15 H2Z" fill="#c8d8f0" stroke="#8898b8" stroke-width="0.7"/><rect x="8" y="1" width="7" height="5" fill="#fff" stroke="#8898b8" stroke-width="0.5"/></svg>
<svg class="a" style="left:649px;top:77px" width="16" height="16" viewBox="0 0 16 16"><path d="M2 4 Q8 0 13 4 L12 10 H4Z" fill="#b89070" stroke="#503018" stroke-width="0.6"/><circle cx="9" cy="11" r="3.5" fill="#888" stroke="#333" stroke-width="0.8"/><path d="M12 3 V12 M8 7 H15" stroke="#222" stroke-width="0.8"/></svg>
<svg class="a" style="left:671px;top:77px" width="16" height="16" viewBox="0 0 16 16"><circle cx="6" cy="6" r="4.5" fill="#fff" stroke="#3060c0" stroke-width="1.6"/><rect x="5" y="2" width="7" height="6" fill="none" stroke="#333" stroke-width="0.8"/><path d="M9 9 L15 15" stroke="#3060c0" stroke-width="2.2"/><rect x="11.0" y="1.0" width="2" height="2" fill="#e01010"/></svg>
<svg class="a" style="left:693px;top:77px" width="16" height="16" viewBox="0 0 16 16"><circle cx="6" cy="6" r="4.5" fill="#fff" stroke="#3060c0" stroke-width="1.6"/><path d="M8 1 L14 7 M14 1 L8 7" stroke="#e02020" stroke-width="1.4"/><path d="M9 9 L15 15" stroke="#3060c0" stroke-width="2.2"/></svg>
<svg class="a" style="left:715px;top:77px" width="16" height="16" viewBox="0 0 16 16"><path d="M1.5 4.5 L4.5 1.5 H14.5 V11.5 L11.5 14.5 H1.5Z M1.5 4.5 H11.5 V14.5 M11.5 4.5 L14.5 1.5" fill="#dde6f5" stroke="#6a7aa0" stroke-width="1.1"/><rect x="4" y="6" width="5" height="6" fill="none" stroke="#9aaac8" stroke-width="0.6"/></svg>
<svg class="a" style="left:737px;top:77px" width="16" height="16" viewBox="0 0 16 16"><path d="M1 9 L4 6 H10 V12 L7 15 H1Z" fill="#c8d4ec" stroke="#6a7aa0" stroke-width="0.7"/><path d="M6 4 L9 1 H15 V7 L12 10 H6Z" fill="#c8d4ec" stroke="#6a7aa0" stroke-width="0.7"/></svg>
<svg class="a" style="left:768px;top:77px" width="16" height="16" viewBox="0 0 16 16"><path d="M3 15 V3 H13" stroke="#30a040" stroke-width="1.5" fill="none"/><path d="M3 3 V15" stroke="#3050d0" stroke-width="1.5"/><path d="M1 12 L3 16 L5 12Z" fill="#3050d0"/><path d="M11 1 L15 3 L11 5Z" fill="#30a040"/><text x="7" y="15" font-size="8" fill="#222" font-family="Liberation Serif">X</text></svg>
<svg class="a" style="left:790px;top:77px" width="16" height="16" viewBox="0 0 16 16"><path d="M2 3 H14" stroke="#e02020" stroke-width="1.5"/><path d="M12 3 V15" stroke="#3050d0" stroke-width="1.5"/><path d="M10 12 L12 16 L14 12Z" fill="#3050d0"/><text x="1" y="15" font-size="8" fill="#222" font-family="Liberation Serif">Y</text></svg>
<svg class="a" style="left:812px;top:77px" width="16" height="16" viewBox="0 0 16 16"><path d="M3 15 V3 H13" stroke="#e02020" stroke-width="1.5" fill="none"/><path d="M3 5 V15" stroke="#30a040" stroke-width="1.5"/><path d="M1 12 L3 16 L5 12Z" fill="#30a040"/><text x="7" y="15" font-size="8" fill="#222" font-family="Liberation Serif">Z</text></svg>
<svg class="a" style="left:834px;top:77px" width="16" height="16" viewBox="0 0 16 16"><circle cx="3" cy="3" r="2.2" fill="#30a040"/><path d="M3 3 H13" stroke="#e02020" stroke-width="1.5"/><path d="M3 4 V15" stroke="#3050d0" stroke-width="1.5"/><text x="5" y="15" font-size="8" fill="#222" font-family="Liberation Serif">-Y</text></svg>
<svg class="a" style="left:870px;top:77px" width="16" height="16" viewBox="0 0 16 16"><path d="M1 1 L6 6" stroke="#3080e0" stroke-width="1.5"/><path d="M3 14 H13 L10 11 H6Z" fill="#555"/><path d="M6 11 L12 3" stroke="#555" stroke-width="2.5"/><circle cx="12" cy="3" r="2" fill="#aaa"/></svg>
<svg class="a" style="left:913px;top:77px" width="16" height="16" viewBox="0 0 16 16"><path d="M2 3 L9 1 L15 5 L15 12 L8 15 L2 12Z" fill="#4a7ac8" stroke="#1a3a80" stroke-width="0.8"/><path d="M6 6 L11 5 V10 L6 11Z" fill="#a8c8f0"/></svg>
<svg class="a" style="left:957px;top:77px" width="16" height="16" viewBox="0 0 16 16"><path d="M2 15 L4 3 L13 1 L14 13" stroke="#6a8a9a" stroke-width="1.2" fill="none"/><rect x="1" y="14" width="3" height="2" fill="#30a040"/><rect x="13" y="13" width="3" height="2" fill="#30a040"/><circle cx="4" cy="3" r="1" fill="#e02020"/><circle cx="13" cy="1.5" r="1" fill="#e02020"/></svg>
<svg class="a" style="left:977px;top:77px" width="16" height="16" viewBox="0 0 16 16"><rect x="1" y="4" width="14" height="8" rx="4" fill="#e8e0d8" stroke="#999" stroke-width="0.7"/><rect x="5" y="7" width="2" height="2" fill="#3050d0"/><rect x="8" y="7" width="2" height="2" fill="#e02020"/></svg>
<svg class="a" style="left:1010px;top:77px" width="16" height="16" viewBox="0 0 16 16"><path d="M1 15 L15 11" stroke="#d04040" stroke-width="1.2"/><path d="M1 15 L7 13" stroke="#4060c0" stroke-width="1.2"/><path d="M5 1 H11 M8 1 V8 M5 8 H11" stroke="#3050a0" stroke-width="1.2"/><path d="M1 13 L15 9" stroke="#aaa" stroke-width="0.6"/></svg>
<svg class="a" style="left:1032px;top:77px" width="16" height="16" viewBox="0 0 16 16"><path d="M1 9 L8 3 L15 6 L9 13Z" fill="#e04040"/><path d="M3 9 L8 5 L13 7 L9 11Z" fill="#f0e040"/><path d="M5 9 L8 7 L11 8 L9 10Z" fill="#40b0e0"/></svg>
<svg class="a" style="left:1054px;top:77px" width="16" height="16" viewBox="0 0 16 16"><path d="M2 4 L6 1 H15 V11 L11 15 H2Z" fill="#6ab0a0" stroke="#4a7080" stroke-width="0.7"/><circle cx="7" cy="9" r="3" fill="#e06040"/><circle cx="7" cy="9" r="1.5" fill="#f0e040"/></svg>
<svg class="a" style="left:1077px;top:77px" width="16" height="16" viewBox="0 0 16 16"><ellipse cx="7" cy="5" rx="4" ry="2.5" fill="#80c080"/><path d="M7 8 V15 M5 12 L7 9 L9 12" stroke="#30a040" stroke-width="1.3" fill="none"/><path d="M10 3 H15 M12 1 L10 3 L12 5" stroke="#30a040" stroke-width="1.3" fill="none"/></svg>
<svg class="a" style="left:1098px;top:77px" width="16" height="16" viewBox="0 0 16 16"><path d="M1 15 L15 11" stroke="#d04040" stroke-width="1.2"/><path d="M1 15 L7 13" stroke="#4060c0" stroke-width="1.2"/><path d="M3 10 L14 3 L12 6 L4 11Z" fill="#7090b0" stroke="#444" stroke-width="0.5"/></svg>
<svg class="a" style="left:1122px;top:77px" width="16" height="16" viewBox="0 0 16 16"><rect x="1" y="1" width="6" height="6" rx="1" fill="#f0e070" stroke="#444" stroke-width="0.8"/><rect x="9" y="1" width="6" height="6" rx="1" fill="#f0e070" stroke="#444" stroke-width="0.8"/><rect x="1" y="9" width="6" height="6" rx="1" fill="#f0e070" stroke="#444" stroke-width="0.8"/><rect x="9" y="9" width="6" height="6" rx="1" fill="#f0e070" stroke="#444" stroke-width="0.8"/></svg>
<svg class="a" style="left:1154px;top:77px" width="16" height="16" viewBox="0 0 16 16"><path d="M5 1 H11 M8 1 V8 M5 8 H11" stroke="#3050a0" stroke-width="1.2"/><path d="M1 11 H15" stroke="#222" stroke-width="0.8"/><path d="M1 12 Q4 17 8 11" stroke="#2040d0" stroke-width="1.2" fill="none"/><path d="M8 11 Q12 6 15 12" stroke="#e02020" stroke-width="1.2" fill="none"/></svg>
<svg class="a" style="left:1177px;top:77px" width="16" height="16" viewBox="0 0 16 16"><rect x="1.5" y="1.5" width="13" height="13" fill="#e8eef8" stroke="#333" stroke-width="0.8"/><path d="M2 5 H14 M2 8 H14 M2 11 H14 M8 2 V14" stroke="#3050a0" stroke-width="1.1"/></svg>
<svg class="a" style="left:1209px;top:77px" width="16" height="16" viewBox="0 0 16 16"><rect x="2.5" y="1.5" width="11" height="13" fill="#f0f0f0" stroke="#888"/><path d="M4 4 H12 M4 6 H12 M4 8 H12 M4 10 H12" stroke="#d08080" stroke-width="0.8"/><path d="M4 5 H8 M4 9 H8" stroke="#6080d0" stroke-width="0.8"/></svg>
<svg class="a" style="left:1231px;top:77px" width="16" height="16" viewBox="0 0 16 16"><path d="M4 1.7999999999999998 L4.9 4.1 L7.2 5 L4.9 5.9 L4 8.2 L3.1 5.9 L0.7999999999999998 5 L3.1 4.1Z" fill="#f6f020" stroke="#b8a800" stroke-width="0.6"/><path d="M3 15 L13 5" stroke="#1a3070" stroke-width="2.2"/><path d="M10 1 L14 5" stroke="#e02020" stroke-width="1.2"/><path d="M9 12 L13 15" stroke="#555" stroke-width="1.5"/></svg>
<svg class="a" style="left:1266px;top:77px" width="16" height="16" viewBox="0 0 16 16"><path d="M2 15 L14 3" stroke="#30a040" stroke-width="2"/><path d="M2 11 L11 2" stroke="#f0d020" stroke-width="2"/><path d="M2 7 L7 2" stroke="#e02020" stroke-width="2"/><path d="M1 1 V15 H15" stroke="#111" stroke-width="1" fill="none"/><path d="M10 9 L15 4" stroke="#e0a020" stroke-width="1.5"/></svg>
<svg class="a" style="left:1313px;top:77px" width="16" height="16" viewBox="0 0 16 16"><rect x="2" y="0" width="12" height="8" fill="#3a50b8"/><circle cx="8" cy="4" r="2.3" fill="none" stroke="#d8b840" stroke-width="0.6"/><path d="M3.5 15.5 V10.5 L12.5 8.5 V15.5Z" fill="#ddd" stroke="#111" stroke-width="1.3"/></svg>
<svg class="a" style="left:1348px;top:77px" width="16" height="16" viewBox="0 0 16 16"><rect x="2" y="0" width="12" height="8" fill="#3a50b8"/><circle cx="8" cy="4" r="2.3" fill="none" stroke="#d8b840" stroke-width="0.6"/><path d="M3.5 15.5 V11 Q8 8 12.5 11 V15.5Z" fill="#ddd" stroke="#111" stroke-width="1.3"/></svg>
<div class="a" style="left:5px;top:103px;width:3px;height:16px;background:linear-gradient(90deg,#a3abb8 0 2px,#fff 2px 3px);-webkit-mask:repeating-linear-gradient(#000 0 2px,transparent 2px 4px);mask:repeating-linear-gradient(#000 0 2px,transparent 2px 4px)"></div>
<svg class="a" style="left:14px;top:103px" width="16" height="16" viewBox="0 0 16 16"><rect x="2" y="0" width="12" height="7" fill="#3a50b8"/><circle cx="8" cy="3.5" r="2" fill="none" stroke="#e8c840" stroke-width="0.6" stroke-dasharray="0.6 0.6"/><path d="M0.5 11.5 H5.5 M0.5 14.5 H5.5" stroke="#111" stroke-width="1"/><path d="M4 9.5 L6.5 11.5 L4 13.5Z M4 12.5 L6.5 14.5 L4 16.5Z" fill="#111"/><path d="M7.5 15.5 V10 L14.5 8 V15.5Z" fill="#ddd" stroke="#111" stroke-width="1.1"/></svg>
<div class="a" style="left:36px;top:110px;width:0;height:0;border-left:3.5px solid transparent;border-right:3.5px solid transparent;border-top:4px solid #555"></div>
<svg class="a" style="left:48px;top:103px" width="16" height="16" viewBox="0 0 16 16"><rect x="2" y="0" width="12" height="7" fill="#3a50b8"/><circle cx="8" cy="3.5" r="2" fill="none" stroke="#e8c840" stroke-width="0.6" stroke-dasharray="0.6 0.6"/><path d="M0.5 11.5 H5.5 M0.5 14.5 H5.5" stroke="#111" stroke-width="1"/><path d="M4 9.5 L6.5 11.5 L4 13.5Z M4 12.5 L6.5 14.5 L4 16.5Z" fill="#111"/><rect x="7.5" y="10.5" width="7" height="5" fill="#ddd" stroke="#111" stroke-width="1.1"/></svg>
<div class="a" style="left:70px;top:110px;width:0;height:0;border-left:3.5px solid transparent;border-right:3.5px solid transparent;border-top:4px solid #555"></div>
<svg class="a" style="left:82px;top:103px" width="16" height="16" viewBox="0 0 16 16"><rect x="2" y="0" width="12" height="7" fill="#3a50b8"/><circle cx="8" cy="3.5" r="2" fill="none" stroke="#e8c840" stroke-width="0.6" stroke-dasharray="0.6 0.6"/><path d="M0.5 11.5 H5.5 M0.5 14.5 H5.5" stroke="#111" stroke-width="1"/><path d="M4 9.5 L6.5 11.5 L4 13.5Z M4 12.5 L6.5 14.5 L4 16.5Z" fill="#111"/><path d="M7.5 15.5 V10 L14.5 8 V15.5Z" fill="#ddd" stroke="#111" stroke-width="1.1"/></svg>
<div class="a" style="left:104px;top:110px;width:0;height:0;border-left:3.5px solid transparent;border-right:3.5px solid transparent;border-top:4px solid #555"></div>
<svg class="a" style="left:116px;top:103px" width="16" height="16" viewBox="0 0 16 16"><rect x="2" y="0" width="12" height="7" fill="#3a50b8"/><circle cx="8" cy="3.5" r="2" fill="none" stroke="#e8c840" stroke-width="0.6" stroke-dasharray="0.6 0.6"/><path d="M0.5 11.5 H5.5 M0.5 14.5 H5.5" stroke="#111" stroke-width="1"/><path d="M4 9.5 L6.5 11.5 L4 13.5Z M4 12.5 L6.5 14.5 L4 16.5Z" fill="#111"/><path d="M7.5 15.5 V11 Q11 8 14.5 11 V15.5Z" fill="#ddd" stroke="#111" stroke-width="1.1"/></svg>
<div class="a" style="left:138px;top:110px;width:0;height:0;border-left:3.5px solid transparent;border-right:3.5px solid transparent;border-top:4px solid #555"></div>
<svg class="a" style="left:150px;top:103px" width="16" height="16" viewBox="0 0 16 16"><rect x="2" y="0" width="12" height="7" fill="#3a50b8"/><circle cx="8" cy="3.5" r="2" fill="none" stroke="#e8c840" stroke-width="0.6" stroke-dasharray="0.6 0.6"/><path d="M0.5 11.5 H5.5 M0.5 14.5 H5.5" stroke="#111" stroke-width="1"/><path d="M4 9.5 L6.5 11.5 L4 13.5Z M4 12.5 L6.5 14.5 L4 16.5Z" fill="#111"/><path d="M7.5 15.5 V11 Q11 8 14.5 11 V15.5Z" fill="#ddd" stroke="#111" stroke-width="1.1"/></svg>
<div class="a" style="left:172px;top:110px;width:0;height:0;border-left:3.5px solid transparent;border-right:3.5px solid transparent;border-top:4px solid #555"></div>
<div class="a" style="left:0;top:124px;width:368px;height:871px;background:#eef2fb;border-right:1px solid #a8adb8"></div>
<div class="a" style="left:1px;top:125px;width:366px;height:19px;background:#bcc4d0"></div>
<div class="t" style="left:5px;top:128px;font-size:11.4px;color:#4a4640">Project Navigator - Data</div>
<svg class="a" style="left:337px;top:128px" width="10" height="12" viewBox="0 0 10 12"><path d="M2.5 1.5 H7.5 V7.5 H2.5Z M5 7.5 V11 M1 7.5 H9 M6 1.5 V7.5" fill="none" stroke="#606060" stroke-width="1.1"/></svg>
<svg class="a" style="left:354px;top:129px" width="10" height="10" viewBox="0 0 10 10"><path d="M1 1 L9 9 M9 1 L1 9" stroke="#606060" stroke-width="1.3"/></svg>
<div class="a" style="left:3px;top:146px;width:362px;height:846px;background:#fafaf2;border:1px solid #828790;border-right-color:#fff;border-bottom-color:#fff"></div>
<div class="a" style="left:348px;top:147px;width:16px;height:829px;background:#f0f0f0"></div>
<div class="a" style="left:348px;top:171px;width:15px;height:317px;background:#cdcdcd"></div>
<svg class="a" style="left:350px;top:153px" width="12" height="8" viewBox="0 0 12 8"><path d="M2 6.5 L6 2.5 L10 6.5" fill="none" stroke="#505050" stroke-width="1.6"/></svg>
<svg class="a" style="left:350px;top:962px" width="12" height="8" viewBox="0 0 12 8"><path d="M2 1.5 L6 5.5 L10 1.5" fill="none" stroke="#505050" stroke-width="1.6"/></svg>
<div class="a" style="left:4px;top:976px;width:360px;height:15px;background:#f0f0f0"></div>
<div class="a" style="left:21px;top:976px;width:168px;height:15px;background:#cdcdcd"></div>
<svg class="a" style="left:8px;top:978px" width="8" height="12" viewBox="0 0 8 12"><path d="M6 2 L2 6 L6 10" fill="none" stroke="#505050" stroke-width="1.6"/></svg>
<svg class="a" style="left:334px;top:978px" width="8" height="12" viewBox="0 0 8 12"><path d="M2 2 L6 6 L2 10" fill="none" stroke="#505050" stroke-width="1.6"/></svg>
<div class="a" style="left:0;top:994px;width:368px;height:1px;background:#9aa0aa"></div>
<div class="a" style="left:15px;top:148px;width:1px;height:6px;background:repeating-linear-gradient(#808080 0 1px,transparent 1px 2px)"></div>
<div class="a" style="left:34px;top:171px;width:1px;height:807px;background:repeating-linear-gradient(#808080 0 1px,transparent 1px 2px)"></div>
<div class="a" style="left:53px;top:189px;width:1px;height:545px;background:repeating-linear-gradient(#808080 0 1px,transparent 1px 2px)"></div>
<div class="a" style="left:53px;top:765px;width:1px;height:95px;background:repeating-linear-gradient(#808080 0 1px,transparent 1px 2px)"></div>
<div class="a" style="left:16px;top:158px;width:11px;height:1px;background:repeating-linear-gradient(90deg,#808080 0 1px,transparent 1px 2px)"></div>
<div class="a" style="left:11px;top:154px;width:9px;height:9px;background:linear-gradient(#fff,#e4e4e4);border:1px solid #8c8c8c;border-radius:1px"></div><div class="a" style="left:13px;top:158px;width:5px;height:1px;background:#2a40a0"></div>
<svg class="a" style="left:27px;top:149px" width="17" height="18" viewBox="0 0 17 18"><path d="M4.5 1.5 H12 L15.5 5 V16.5 H4.5Z" fill="#f4f4f4" stroke="#777"/><path d="M7 7 H13 M7 9 H13 M7 11 H13 M7 13 H13" stroke="#999" stroke-width="0.7"/><path d="M1 8 L7 4 L11 7 L5 12Z" fill="#4a78c8" stroke="#2a4a90" stroke-width="0.6"/></svg>
<div class="t" style="left:47px;top:151px;font-size:12.3px;letter-spacing:-0.2px;font-weight:bold;color:#000">Rfem-Concrete hall</div>
<div class="a" style="left:35px;top:176px;width:10px;height:1px;background:repeating-linear-gradient(90deg,#808080 0 1px,transparent 1px 2px)"></div>
<div class="a" style="left:30px;top:172px;width:9px;height:9px;background:linear-gradient(#fff,#e4e4e4);border:1px solid #8c8c8c;border-radius:1px"></div><div class="a" style="left:32px;top:176px;width:5px;height:1px;background:#2a40a0"></div>
<svg class="a" style="left:46px;top:168px" width="14" height="14" viewBox="0 0 14 14"><defs><linearGradient id="fg" x1="0" y1="0" x2="0" y2="1"><stop offset="0" stop-color="#fbf0a0"/><stop offset="1" stop-color="#e2c020"/></linearGradient></defs><path d="M1 1.5 H5 L6.5 3 H13 V12 H1Z" fill="#efd868"/><path d="M1 3.5 H13.5 V12.5 H1Z" fill="url(#fg)"/><path d="M13.5 4 V12.5 H1.5" fill="none" stroke="#6a6040" stroke-width="1"/></svg>
<div class="t" style="left:66px;top:169px;font-size:12.5px;letter-spacing:-0.25px;color:#000">Model Data</div>
<div class="a" style="left:54px;top:194px;width:11px;height:1px;background:repeating-linear-gradient(90deg,#808080 0 1px,transparent 1px 2px)"></div>
<div class="a" style="left:49px;top:190px;width:9px;height:9px;background:linear-gradient(#fff,#e4e4e4);border:1px solid #8c8c8c;border-radius:1px"></div><div class="a" style="left:51px;top:194px;width:5px;height:1px;background:#2a40a0"></div><div class="a" style="left:53px;top:192px;width:1px;height:5px;background:#2a40a0"></div>
<svg class="a" style="left:66px;top:186px" width="14" height="14" viewBox="0 0 14 14"><defs><linearGradient id="fg" x1="0" y1="0" x2="0" y2="1"><stop offset="0" stop-color="#fbf0a0"/><stop offset="1" stop-color="#e2c020"/></linearGradient></defs><path d="M1 1.5 H5 L6.5 3 H13 V12 H1Z" fill="#efd868"/><path d="M1 3.5 H13.5 V12.5 H1Z" fill="url(#fg)"/><path d="M13.5 4 V12.5 H1.5" fill="none" stroke="#6a6040" stroke-width="1"/><rect x="5" y="7" width="3" height="3" fill="#e02020"/></svg>
<div class="t" style="left:85px;top:187px;font-size:12.5px;letter-spacing:-0.25px;color:#000">Nodes</div>
<div class="a" style="left:54px;top:212px;width:11px;height:1px;background:repeating-linear-gradient(90deg,#808080 0 1px,transparent 1px 2px)"></div>
<div class="a" style="left:49px;top:208px;width:9px;height:9px;background:linear-gradient(#fff,#e4e4e4);border:1px solid #8c8c8c;border-radius:1px"></div><div class="a" style="left:51px;top:212px;width:5px;height:1px;background:#2a40a0"></div><div class="a" style="left:53px;top:210px;width:1px;height:5px;background:#2a40a0"></div>
<svg class="a" style="left:66px;top:204px" width="14" height="14" viewBox="0 0 14 14"><defs><linearGradient id="fg" x1="0" y1="0" x2="0" y2="1"><stop offset="0" stop-color="#fbf0a0"/><stop offset="1" stop-color="#e2c020"/></linearGradient></defs><path d="M1 1.5 H5 L6.5 3 H13 V12 H1Z" fill="#efd868"/><path d="M1 3.5 H13.5 V12.5 H1Z" fill="url(#fg)"/><path d="M13.5 4 V12.5 H1.5" fill="none" stroke="#6a6040" stroke-width="1"/><path d="M3 11 L11 5" stroke="#e02020" stroke-width="1"/></svg>
<div class="t" style="left:85px;top:205px;font-size:12.5px;letter-spacing:-0.25px;color:#000">Lines</div>
<div class="a" style="left:54px;top:230px;width:11px;height:1px;background:repeating-linear-gradient(90deg,#808080 0 1px,transparent 1px 2px)"></div>
<div class="a" style="left:49px;top:226px;width:9px;height:9px;background:linear-gradient(#fff,#e4e4e4);border:1px solid #8c8c8c;border-radius:1px"></div><div class="a" style="left:51px;top:230px;width:5px;height:1px;background:#2a40a0"></div><div class="a" style="left:53px;top:228px;width:1px;height:5px;background:#2a40a0"></div>
<svg class="a" style="left:66px;top:222px" width="14" height="14" viewBox="0 0 14 14"><defs><linearGradient id="fg" x1="0" y1="0" x2="0" y2="1"><stop offset="0" stop-color="#fbf0a0"/><stop offset="1" stop-color="#e2c020"/></linearGradient></defs><path d="M1 1.5 H5 L6.5 3 H13 V12 H1Z" fill="#efd868"/><path d="M1 3.5 H13.5 V12.5 H1Z" fill="url(#fg)"/><path d="M13.5 4 V12.5 H1.5" fill="none" stroke="#6a6040" stroke-width="1"/><rect x="4" y="6" width="6" height="6" fill="#3050c0"/><rect x="4" y="6" width="3" height="3" fill="#e02020"/><rect x="7" y="9" width="3" height="3" fill="#30a040"/></svg>
<div class="t" style="left:85px;top:223px;font-size:12.5px;letter-spacing:-0.25px;color:#000">Materials</div>
<div class="a" style="left:54px;top:248px;width:11px;height:1px;background:repeating-linear-gradient(90deg,#808080 0 1px,transparent 1px 2px)"></div>
<svg class="a" style="left:66px;top:240px" width="14" height="14" viewBox="0 0 14 14"><defs><linearGradient id="fg" x1="0" y1="0" x2="0" y2="1"><stop offset="0" stop-color="#fbf0a0"/><stop offset="1" stop-color="#e2c020"/></linearGradient></defs><path d="M1 1.5 H5 L6.5 3 H13 V12 H1Z" fill="#efd868"/><path d="M1 3.5 H13.5 V12.5 H1Z" fill="url(#fg)"/><path d="M13.5 4 V12.5 H1.5" fill="none" stroke="#6a6040" stroke-width="1"/><path d="M3 9 L8 6 L11 8 L6 11Z" fill="#6a9ad8"/></svg>
<div class="t" style="left:85px;top:241px;font-size:12.5px;letter-spacing:-0.25px;color:#000">Surfaces</div>
<div class="a" style="left:54px;top:266px;width:11px;height:1px;background:repeating-linear-gradient(90deg,#808080 0 1px,transparent 1px 2px)"></div>
<svg class="a" style="left:66px;top:258px" width="14" height="14" viewBox="0 0 14 14"><defs><linearGradient id="fg" x1="0" y1="0" x2="0" y2="1"><stop offset="0" stop-color="#fbf0a0"/><stop offset="1" stop-color="#e2c020"/></linearGradient></defs><path d="M1 1.5 H5 L6.5 3 H13 V12 H1Z" fill="#efd868"/><path d="M1 3.5 H13.5 V12.5 H1Z" fill="url(#fg)"/><path d="M13.5 4 V12.5 H1.5" fill="none" stroke="#6a6040" stroke-width="1"/><rect x="4" y="6" width="6" height="6" fill="#6a88c8"/></svg>
<div class="t" style="left:85px;top:259px;font-size:12.5px;letter-spacing:-0.25px;color:#000">Solids</div>
<div class="a" style="left:54px;top:284px;width:11px;height:1px;background:repeating-linear-gradient(90deg,#808080 0 1px,transparent 1px 2px)"></div>
<svg class="a" style="left:66px;top:276px" width="14" height="14" viewBox="0 0 14 14"><defs><linearGradient id="fg" x1="0" y1="0" x2="0" y2="1"><stop offset="0" stop-color="#fbf0a0"/><stop offset="1" stop-color="#e2c020"/></linearGradient></defs><path d="M1 1.5 H5 L6.5 3 H13 V12 H1Z" fill="#efd868"/><path d="M1 3.5 H13.5 V12.5 H1Z" fill="url(#fg)"/><path d="M13.5 4 V12.5 H1.5" fill="none" stroke="#6a6040" stroke-width="1"/><rect x="3.5" y="6.5" width="7" height="5" fill="none" stroke="#3a5090"/></svg>
<div class="t" style="left:85px;top:277px;font-size:12.5px;letter-spacing:-0.25px;color:#000">Openings</div>
<div class="a" style="left:54px;top:302px;width:11px;height:1px;background:repeating-linear-gradient(90deg,#808080 0 1px,transparent 1px 2px)"></div>
<div class="a" style="left:49px;top:298px;width:9px;height:9px;background:linear-gradient(#fff,#e4e4e4);border:1px solid #8c8c8c;border-radius:1px"></div><div class="a" style="left:51px;top:302px;width:5px;height:1px;background:#2a40a0"></div><div class="a" style="left:53px;top:300px;width:1px;height:5px;background:#2a40a0"></div>
<svg class="a" style="left:66px;top:294px" width="14" height="14" viewBox="0 0 14 14"><defs><linearGradient id="fg" x1="0" y1="0" x2="0" y2="1"><stop offset="0" stop-color="#fbf0a0"/><stop offset="1" stop-color="#e2c020"/></linearGradient></defs><path d="M1 1.5 H5 L6.5 3 H13 V12 H1Z" fill="#efd868"/><path d="M1 3.5 H13.5 V12.5 H1Z" fill="url(#fg)"/><path d="M13.5 4 V12.5 H1.5" fill="none" stroke="#6a6040" stroke-width="1"/><path d="M4 12 L7 7 L10 12Z" fill="#30a040"/><rect x="6" y="5" width="2" height="2" fill="#e02020"/></svg>
<div class="t" style="left:85px;top:295px;font-size:12.5px;letter-spacing:-0.25px;color:#000">Nodal Supports</div>
<div class="a" style="left:54px;top:320px;width:11px;height:1px;background:repeating-linear-gradient(90deg,#808080 0 1px,transparent 1px 2px)"></div>
<svg class="a" style="left:66px;top:312px" width="14" height="14" viewBox="0 0 14 14"><defs><linearGradient id="fg" x1="0" y1="0" x2="0" y2="1"><stop offset="0" stop-color="#fbf0a0"/><stop offset="1" stop-color="#e2c020"/></linearGradient></defs><path d="M1 1.5 H5 L6.5 3 H13 V12 H1Z" fill="#efd868"/><path d="M1 3.5 H13.5 V12.5 H1Z" fill="url(#fg)"/><path d="M13.5 4 V12.5 H1.5" fill="none" stroke="#6a6040" stroke-width="1"/><path d="M3 9 H11" stroke="#30a040" stroke-width="1.5"/><path d="M3 11 H11" stroke="#30a040" stroke-width="1"/></svg>
<div class="t" style="left:85px;top:313px;font-size:12.5px;letter-spacing:-0.25px;color:#000">Line Supports</div>
<div class="a" style="left:54px;top:338px;width:11px;height:1px;background:repeating-linear-gradient(90deg,#808080 0 1px,transparent 1px 2px)"></div>
<svg class="a" style="left:66px;top:330px" width="14" height="14" viewBox="0 0 14 14"><defs><linearGradient id="fg" x1="0" y1="0" x2="0" y2="1"><stop offset="0" stop-color="#fbf0a0"/><stop offset="1" stop-color="#e2c020"/></linearGradient></defs><path d="M1 1.5 H5 L6.5 3 H13 V12 H1Z" fill="#efd868"/><path d="M1 3.5 H13.5 V12.5 H1Z" fill="url(#fg)"/><path d="M13.5 4 V12.5 H1.5" fill="none" stroke="#6a6040" stroke-width="1"/><path d="M3 10 L7 6 L11 9 L7 12Z" fill="#30a040"/></svg>
<div class="t" style="left:85px;top:331px;font-size:12.5px;letter-spacing:-0.25px;color:#000">Surface Supports</div>
<div class="a" style="left:54px;top:356px;width:11px;height:1px;background:repeating-linear-gradient(90deg,#808080 0 1px,transparent 1px 2px)"></div>
<svg class="a" style="left:66px;top:348px" width="14" height="14" viewBox="0 0 14 14"><defs><linearGradient id="fg" x1="0" y1="0" x2="0" y2="1"><stop offset="0" stop-color="#fbf0a0"/><stop offset="1" stop-color="#e2c020"/></linearGradient></defs><path d="M1 1.5 H5 L6.5 3 H13 V12 H1Z" fill="#efd868"/><path d="M1 3.5 H13.5 V12.5 H1Z" fill="url(#fg)"/><path d="M13.5 4 V12.5 H1.5" fill="none" stroke="#6a6040" stroke-width="1"/><path d="M3 10 L11 7" stroke="#7a90c0" stroke-width="1.5"/></svg>
<div class="t" style="left:85px;top:349px;font-size:12.5px;letter-spacing:-0.25px;color:#000">Line Hinges</div>
<div class="a" style="left:54px;top:374px;width:11px;height:1px;background:repeating-linear-gradient(90deg,#808080 0 1px,transparent 1px 2px)"></div>
<svg class="a" style="left:66px;top:366px" width="14" height="14" viewBox="0 0 14 14"><defs><linearGradient id="fg" x1="0" y1="0" x2="0" y2="1"><stop offset="0" stop-color="#fbf0a0"/><stop offset="1" stop-color="#e2c020"/></linearGradient></defs><path d="M1 1.5 H5 L6.5 3 H13 V12 H1Z" fill="#efd868"/><path d="M1 3.5 H13.5 V12.5 H1Z" fill="url(#fg)"/><path d="M13.5 4 V12.5 H1.5" fill="none" stroke="#6a6040" stroke-width="1"/><path d="M3 10 L8 7 L11 8 L6 11Z" fill="#5a80c8"/></svg>
<div class="t" style="left:85px;top:367px;font-size:12.5px;letter-spacing:-0.25px;color:#000">Variable Thicknesses</div>
<div class="a" style="left:54px;top:392px;width:11px;height:1px;background:repeating-linear-gradient(90deg,#808080 0 1px,transparent 1px 2px)"></div>
<svg class="a" style="left:66px;top:384px" width="14" height="14" viewBox="0 0 14 14"><defs><linearGradient id="fg" x1="0" y1="0" x2="0" y2="1"><stop offset="0" stop-color="#fbf0a0"/><stop offset="1" stop-color="#e2c020"/></linearGradient></defs><path d="M1 1.5 H5 L6.5 3 H13 V12 H1Z" fill="#efd868"/><path d="M1 3.5 H13.5 V12.5 H1Z" fill="url(#fg)"/><path d="M13.5 4 V12.5 H1.5" fill="none" stroke="#6a6040" stroke-width="1"/><ellipse cx="7" cy="9" rx="4" ry="2" fill="#e04060"/></svg>
<div class="t" style="left:85px;top:385px;font-size:12.5px;letter-spacing:-0.25px;color:#000">Orthotropic Surfaces and Membranes</div>
<div class="a" style="left:54px;top:410px;width:11px;height:1px;background:repeating-linear-gradient(90deg,#808080 0 1px,transparent 1px 2px)"></div>
<div class="a" style="left:49px;top:406px;width:9px;height:9px;background:linear-gradient(#fff,#e4e4e4);border:1px solid #8c8c8c;border-radius:1px"></div><div class="a" style="left:51px;top:410px;width:5px;height:1px;background:#2a40a0"></div><div class="a" style="left:53px;top:408px;width:1px;height:5px;background:#2a40a0"></div>
<svg class="a" style="left:66px;top:402px" width="14" height="14" viewBox="0 0 14 14"><defs><linearGradient id="fg" x1="0" y1="0" x2="0" y2="1"><stop offset="0" stop-color="#fbf0a0"/><stop offset="1" stop-color="#e2c020"/></linearGradient></defs><path d="M1 1.5 H5 L6.5 3 H13 V12 H1Z" fill="#efd868"/><path d="M1 3.5 H13.5 V12.5 H1Z" fill="url(#fg)"/><path d="M13.5 4 V12.5 H1.5" fill="none" stroke="#6a6040" stroke-width="1"/><path d="M4 6 H10 V12 H4Z" fill="#3a60d0"/></svg>
<div class="t" style="left:85px;top:403px;font-size:12.5px;letter-spacing:-0.25px;color:#000">Cross-Sections</div>
<div class="a" style="left:54px;top:428px;width:11px;height:1px;background:repeating-linear-gradient(90deg,#808080 0 1px,transparent 1px 2px)"></div>
<div class="a" style="left:49px;top:424px;width:9px;height:9px;background:linear-gradient(#fff,#e4e4e4);border:1px solid #8c8c8c;border-radius:1px"></div><div class="a" style="left:51px;top:428px;width:5px;height:1px;background:#2a40a0"></div><div class="a" style="left:53px;top:426px;width:1px;height:5px;background:#2a40a0"></div>
<svg class="a" style="left:66px;top:420px" width="14" height="14" viewBox="0 0 14 14"><defs><linearGradient id="fg" x1="0" y1="0" x2="0" y2="1"><stop offset="0" stop-color="#fbf0a0"/><stop offset="1" stop-color="#e2c020"/></linearGradient></defs><path d="M1 1.5 H5 L6.5 3 H13 V12 H1Z" fill="#efd868"/><path d="M1 3.5 H13.5 V12.5 H1Z" fill="url(#fg)"/><path d="M13.5 4 V12.5 H1.5" fill="none" stroke="#6a6040" stroke-width="1"/><circle cx="5" cy="9" r="1.5" fill="#e02020"/><path d="M6 9 H11" stroke="#3050a0"/></svg>
<div class="t" style="left:85px;top:421px;font-size:12.5px;letter-spacing:-0.25px;color:#000">Member Hinges</div>
<div class="a" style="left:54px;top:446px;width:11px;height:1px;background:repeating-linear-gradient(90deg,#808080 0 1px,transparent 1px 2px)"></div>
<div class="a" style="left:49px;top:442px;width:9px;height:9px;background:linear-gradient(#fff,#e4e4e4);border:1px solid #8c8c8c;border-radius:1px"></div><div class="a" style="left:51px;top:446px;width:5px;height:1px;background:#2a40a0"></div><div class="a" style="left:53px;top:444px;width:1px;height:5px;background:#2a40a0"></div>
<svg class="a" style="left:66px;top:438px" width="14" height="14" viewBox="0 0 14 14"><defs><linearGradient id="fg" x1="0" y1="0" x2="0" y2="1"><stop offset="0" stop-color="#fbf0a0"/><stop offset="1" stop-color="#e2c020"/></linearGradient></defs><path d="M1 1.5 H5 L6.5 3 H13 V12 H1Z" fill="#efd868"/><path d="M1 3.5 H13.5 V12.5 H1Z" fill="url(#fg)"/><path d="M13.5 4 V12.5 H1.5" fill="none" stroke="#6a6040" stroke-width="1"/><path d="M3 11 L11 6" stroke="#d06020" stroke-width="1.2"/></svg>
<div class="t" style="left:85px;top:439px;font-size:12.5px;letter-spacing:-0.25px;color:#000">Member Eccentricities</div>
<div class="a" style="left:54px;top:464px;width:11px;height:1px;background:repeating-linear-gradient(90deg,#808080 0 1px,transparent 1px 2px)"></div>
<svg class="a" style="left:66px;top:456px" width="14" height="14" viewBox="0 0 14 14"><defs><linearGradient id="fg" x1="0" y1="0" x2="0" y2="1"><stop offset="0" stop-color="#fbf0a0"/><stop offset="1" stop-color="#e2c020"/></linearGradient></defs><path d="M1 1.5 H5 L6.5 3 H13 V12 H1Z" fill="#efd868"/><path d="M1 3.5 H13.5 V12.5 H1Z" fill="url(#fg)"/><path d="M13.5 4 V12.5 H1.5" fill="none" stroke="#6a6040" stroke-width="1"/><path d="M3 11 L11 6" stroke="#222" stroke-width="1"/><circle cx="7" cy="8.5" r="1" fill="#e02020"/></svg>
<div class="t" style="left:85px;top:457px;font-size:12.5px;letter-spacing:-0.25px;color:#000">Member Divisions</div>
<div class="a" style="left:54px;top:482px;width:11px;height:1px;background:repeating-linear-gradient(90deg,#808080 0 1px,transparent 1px 2px)"></div>
<div class="a" style="left:49px;top:478px;width:9px;height:9px;background:linear-gradient(#fff,#e4e4e4);border:1px solid #8c8c8c;border-radius:1px"></div><div class="a" style="left:51px;top:482px;width:5px;height:1px;background:#2a40a0"></div><div class="a" style="left:53px;top:480px;width:1px;height:5px;background:#2a40a0"></div>
<svg class="a" style="left:66px;top:474px" width="14" height="14" viewBox="0 0 14 14"><defs><linearGradient id="fg" x1="0" y1="0" x2="0" y2="1"><stop offset="0" stop-color="#fbf0a0"/><stop offset="1" stop-color="#e2c020"/></linearGradient></defs><path d="M1 1.5 H5 L6.5 3 H13 V12 H1Z" fill="#efd868"/><path d="M1 3.5 H13.5 V12.5 H1Z" fill="url(#fg)"/><path d="M13.5 4 V12.5 H1.5" fill="none" stroke="#6a6040" stroke-width="1"/><path d="M3 11 L11 6" stroke="#e02020" stroke-width="1.2"/></svg>
<div class="t" style="left:85px;top:475px;font-size:12.5px;letter-spacing:-0.25px;color:#000">Members</div>
<div class="a" style="left:54px;top:500px;width:11px;height:1px;background:repeating-linear-gradient(90deg,#808080 0 1px,transparent 1px 2px)"></div>
<svg class="a" style="left:66px;top:492px" width="14" height="14" viewBox="0 0 14 14"><defs><linearGradient id="fg" x1="0" y1="0" x2="0" y2="1"><stop offset="0" stop-color="#fbf0a0"/><stop offset="1" stop-color="#e2c020"/></linearGradient></defs><path d="M1 1.5 H5 L6.5 3 H13 V12 H1Z" fill="#efd868"/><path d="M1 3.5 H13.5 V12.5 H1Z" fill="url(#fg)"/><path d="M13.5 4 V12.5 H1.5" fill="none" stroke="#6a6040" stroke-width="1"/><ellipse cx="7" cy="9" rx="4" ry="2" fill="none" stroke="#6080b0"/></svg>
<div class="t" style="left:85px;top:493px;font-size:12.5px;letter-spacing:-0.25px;color:#000">Ribs</div>
<div class="a" style="left:54px;top:518px;width:11px;height:1px;background:repeating-linear-gradient(90deg,#808080 0 1px,transparent 1px 2px)"></div>
<svg class="a" style="left:66px;top:510px" width="14" height="14" viewBox="0 0 14 14"><defs><linearGradient id="fg" x1="0" y1="0" x2="0" y2="1"><stop offset="0" stop-color="#fbf0a0"/><stop offset="1" stop-color="#e2c020"/></linearGradient></defs><path d="M1 1.5 H5 L6.5 3 H13 V12 H1Z" fill="#efd868"/><path d="M1 3.5 H13.5 V12.5 H1Z" fill="url(#fg)"/><path d="M13.5 4 V12.5 H1.5" fill="none" stroke="#6a6040" stroke-width="1"/><rect x="3" y="7" width="8" height="3" fill="#30a040"/></svg>
<div class="t" style="left:85px;top:511px;font-size:12.5px;letter-spacing:-0.25px;color:#000">Member Elastic Foundations</div>
<div class="a" style="left:54px;top:536px;width:11px;height:1px;background:repeating-linear-gradient(90deg,#808080 0 1px,transparent 1px 2px)"></div>
<svg class="a" style="left:66px;top:528px" width="14" height="14" viewBox="0 0 14 14"><defs><linearGradient id="fg" x1="0" y1="0" x2="0" y2="1"><stop offset="0" stop-color="#fbf0a0"/><stop offset="1" stop-color="#e2c020"/></linearGradient></defs><path d="M1 1.5 H5 L6.5 3 H13 V12 H1Z" fill="#efd868"/><path d="M1 3.5 H13.5 V12.5 H1Z" fill="url(#fg)"/><path d="M13.5 4 V12.5 H1.5" fill="none" stroke="#6a6040" stroke-width="1"/><path d="M6 6 V12" stroke="#e02020" stroke-width="1.2"/></svg>
<div class="t" style="left:85px;top:529px;font-size:12.5px;letter-spacing:-0.25px;color:#000">Member Nonlinearities</div>
<div class="a" style="left:54px;top:554px;width:11px;height:1px;background:repeating-linear-gradient(90deg,#808080 0 1px,transparent 1px 2px)"></div>
<svg class="a" style="left:66px;top:546px" width="14" height="14" viewBox="0 0 14 14"><defs><linearGradient id="fg" x1="0" y1="0" x2="0" y2="1"><stop offset="0" stop-color="#fbf0a0"/><stop offset="1" stop-color="#e2c020"/></linearGradient></defs><path d="M1 1.5 H5 L6.5 3 H13 V12 H1Z" fill="#efd868"/><path d="M1 3.5 H13.5 V12.5 H1Z" fill="url(#fg)"/><path d="M13.5 4 V12.5 H1.5" fill="none" stroke="#6a6040" stroke-width="1"/><path d="M3 11 L11 6 M4 7 L9 11" stroke="#e02020" stroke-width="1"/></svg>
<div class="t" style="left:85px;top:547px;font-size:12.5px;letter-spacing:-0.25px;color:#000">Sets of Members</div>
<div class="a" style="left:54px;top:572px;width:11px;height:1px;background:repeating-linear-gradient(90deg,#808080 0 1px,transparent 1px 2px)"></div>
<svg class="a" style="left:66px;top:564px" width="14" height="14" viewBox="0 0 14 14"><defs><linearGradient id="fg" x1="0" y1="0" x2="0" y2="1"><stop offset="0" stop-color="#fbf0a0"/><stop offset="1" stop-color="#e2c020"/></linearGradient></defs><path d="M1 1.5 H5 L6.5 3 H13 V12 H1Z" fill="#efd868"/><path d="M1 3.5 H13.5 V12.5 H1Z" fill="url(#fg)"/><path d="M13.5 4 V12.5 H1.5" fill="none" stroke="#6a6040" stroke-width="1"/><circle cx="7" cy="9" r="2.5" fill="#3a70d0"/></svg>
<div class="t" style="left:85px;top:565px;font-size:12.5px;letter-spacing:-0.25px;color:#000">Intersections of Surfaces</div>
<div class="a" style="left:54px;top:590px;width:11px;height:1px;background:repeating-linear-gradient(90deg,#808080 0 1px,transparent 1px 2px)"></div>
<svg class="a" style="left:66px;top:582px" width="14" height="14" viewBox="0 0 14 14"><defs><linearGradient id="fg" x1="0" y1="0" x2="0" y2="1"><stop offset="0" stop-color="#fbf0a0"/><stop offset="1" stop-color="#e2c020"/></linearGradient></defs><path d="M1 1.5 H5 L6.5 3 H13 V12 H1Z" fill="#efd868"/><path d="M1 3.5 H13.5 V12.5 H1Z" fill="url(#fg)"/><path d="M13.5 4 V12.5 H1.5" fill="none" stroke="#6a6040" stroke-width="1"/><rect x="3" y="6" width="8" height="6" fill="#8090b0"/><path d="M5 6 V12 M7 6 V12 M9 6 V12" stroke="#eee" stroke-width="0.6"/></svg>
<div class="t" style="left:85px;top:583px;font-size:12.5px;letter-spacing:-0.25px;color:#000">FE Mesh Refinements</div>
<div class="a" style="left:54px;top:608px;width:11px;height:1px;background:repeating-linear-gradient(90deg,#808080 0 1px,transparent 1px 2px)"></div>
<svg class="a" style="left:66px;top:600px" width="14" height="14" viewBox="0 0 14 14"><defs><linearGradient id="fg" x1="0" y1="0" x2="0" y2="1"><stop offset="0" stop-color="#fbf0a0"/><stop offset="1" stop-color="#e2c020"/></linearGradient></defs><path d="M1 1.5 H5 L6.5 3 H13 V12 H1Z" fill="#efd868"/><path d="M1 3.5 H13.5 V12.5 H1Z" fill="url(#fg)"/><path d="M13.5 4 V12.5 H1.5" fill="none" stroke="#6a6040" stroke-width="1"/></svg>
<div class="t" style="left:85px;top:601px;font-size:12.5px;letter-spacing:-0.25px;color:#000">Nodal Releases</div>
<div class="a" style="left:54px;top:626px;width:11px;height:1px;background:repeating-linear-gradient(90deg,#808080 0 1px,transparent 1px 2px)"></div>
<svg class="a" style="left:66px;top:618px" width="14" height="14" viewBox="0 0 14 14"><defs><linearGradient id="fg" x1="0" y1="0" x2="0" y2="1"><stop offset="0" stop-color="#fbf0a0"/><stop offset="1" stop-color="#e2c020"/></linearGradient></defs><path d="M1 1.5 H5 L6.5 3 H13 V12 H1Z" fill="#efd868"/><path d="M1 3.5 H13.5 V12.5 H1Z" fill="url(#fg)"/><path d="M13.5 4 V12.5 H1.5" fill="none" stroke="#6a6040" stroke-width="1"/></svg>
<div class="t" style="left:85px;top:619px;font-size:12.5px;letter-spacing:-0.25px;color:#000">Line Release Types</div>
<div class="a" style="left:54px;top:644px;width:11px;height:1px;background:repeating-linear-gradient(90deg,#808080 0 1px,transparent 1px 2px)"></div>
<svg class="a" style="left:66px;top:636px" width="14" height="14" viewBox="0 0 14 14"><defs><linearGradient id="fg" x1="0" y1="0" x2="0" y2="1"><stop offset="0" stop-color="#fbf0a0"/><stop offset="1" stop-color="#e2c020"/></linearGradient></defs><path d="M1 1.5 H5 L6.5 3 H13 V12 H1Z" fill="#efd868"/><path d="M1 3.5 H13.5 V12.5 H1Z" fill="url(#fg)"/><path d="M13.5 4 V12.5 H1.5" fill="none" stroke="#6a6040" stroke-width="1"/><path d="M3 10 L11 7" stroke="#a0b0d0" stroke-width="1.5"/></svg>
<div class="t" style="left:85px;top:637px;font-size:12.5px;letter-spacing:-0.25px;color:#000">Line Releases</div>
<div class="a" style="left:54px;top:662px;width:11px;height:1px;background:repeating-linear-gradient(90deg,#808080 0 1px,transparent 1px 2px)"></div>
<svg class="a" style="left:66px;top:654px" width="14" height="14" viewBox="0 0 14 14"><defs><linearGradient id="fg" x1="0" y1="0" x2="0" y2="1"><stop offset="0" stop-color="#fbf0a0"/><stop offset="1" stop-color="#e2c020"/></linearGradient></defs><path d="M1 1.5 H5 L6.5 3 H13 V12 H1Z" fill="#efd868"/><path d="M1 3.5 H13.5 V12.5 H1Z" fill="url(#fg)"/><path d="M13.5 4 V12.5 H1.5" fill="none" stroke="#6a6040" stroke-width="1"/><path d="M2 9 L7 6 L12 8 L7 12Z" fill="#6a9ad8"/></svg>
<div class="t" style="left:85px;top:655px;font-size:12.5px;letter-spacing:-0.25px;color:#000">Surface Release Types</div>
<div class="a" style="left:54px;top:680px;width:11px;height:1px;background:repeating-linear-gradient(90deg,#808080 0 1px,transparent 1px 2px)"></div>
<svg class="a" style="left:66px;top:672px" width="14" height="14" viewBox="0 0 14 14"><defs><linearGradient id="fg" x1="0" y1="0" x2="0" y2="1"><stop offset="0" stop-color="#fbf0a0"/><stop offset="1" stop-color="#e2c020"/></linearGradient></defs><path d="M1 1.5 H5 L6.5 3 H13 V12 H1Z" fill="#efd868"/><path d="M1 3.5 H13.5 V12.5 H1Z" fill="url(#fg)"/><path d="M13.5 4 V12.5 H1.5" fill="none" stroke="#6a6040" stroke-width="1"/><path d="M2 9 L7 6 L12 8 L7 12Z" fill="#6a9ad8"/></svg>
<div class="t" style="left:85px;top:673px;font-size:12.5px;letter-spacing:-0.25px;color:#000">Surface Releases</div>
<div class="a" style="left:54px;top:698px;width:11px;height:1px;background:repeating-linear-gradient(90deg,#808080 0 1px,transparent 1px 2px)"></div>
<svg class="a" style="left:66px;top:690px" width="14" height="14" viewBox="0 0 14 14"><defs><linearGradient id="fg" x1="0" y1="0" x2="0" y2="1"><stop offset="0" stop-color="#fbf0a0"/><stop offset="1" stop-color="#e2c020"/></linearGradient></defs><path d="M1 1.5 H5 L6.5 3 H13 V12 H1Z" fill="#efd868"/><path d="M1 3.5 H13.5 V12.5 H1Z" fill="url(#fg)"/><path d="M13.5 4 V12.5 H1.5" fill="none" stroke="#6a6040" stroke-width="1"/></svg>
<div class="t" style="left:85px;top:691px;font-size:12.5px;letter-spacing:-0.25px;color:#000">Connection of Two Members</div>
<div class="a" style="left:54px;top:716px;width:11px;height:1px;background:repeating-linear-gradient(90deg,#808080 0 1px,transparent 1px 2px)"></div>
<svg class="a" style="left:66px;top:708px" width="14" height="14" viewBox="0 0 14 14"><defs><linearGradient id="fg" x1="0" y1="0" x2="0" y2="1"><stop offset="0" stop-color="#fbf0a0"/><stop offset="1" stop-color="#e2c020"/></linearGradient></defs><path d="M1 1.5 H5 L6.5 3 H13 V12 H1Z" fill="#efd868"/><path d="M1 3.5 H13.5 V12.5 H1Z" fill="url(#fg)"/><path d="M13.5 4 V12.5 H1.5" fill="none" stroke="#6a6040" stroke-width="1"/></svg>
<div class="t" style="left:85px;top:709px;font-size:12.5px;letter-spacing:-0.25px;color:#000">Joints</div>
<div class="a" style="left:54px;top:734px;width:11px;height:1px;background:repeating-linear-gradient(90deg,#808080 0 1px,transparent 1px 2px)"></div>
<svg class="a" style="left:66px;top:726px" width="14" height="14" viewBox="0 0 14 14"><defs><linearGradient id="fg" x1="0" y1="0" x2="0" y2="1"><stop offset="0" stop-color="#fbf0a0"/><stop offset="1" stop-color="#e2c020"/></linearGradient></defs><path d="M1 1.5 H5 L6.5 3 H13 V12 H1Z" fill="#efd868"/><path d="M1 3.5 H13.5 V12.5 H1Z" fill="url(#fg)"/><path d="M13.5 4 V12.5 H1.5" fill="none" stroke="#6a6040" stroke-width="1"/><path d="M2 5 L12 12 M12 5 L2 12" stroke="#e02020" stroke-width="1.5"/><rect x="5" y="7" width="4" height="3" fill="#222"/></svg>
<div class="t" style="left:85px;top:727px;font-size:12.5px;letter-spacing:-0.25px;color:#000">Nodal Constraints</div>
<div class="a" style="left:35px;top:752px;width:10px;height:1px;background:repeating-linear-gradient(90deg,#808080 0 1px,transparent 1px 2px)"></div>
<div class="a" style="left:30px;top:748px;width:9px;height:9px;background:linear-gradient(#fff,#e4e4e4);border:1px solid #8c8c8c;border-radius:1px"></div><div class="a" style="left:32px;top:752px;width:5px;height:1px;background:#2a40a0"></div>
<svg class="a" style="left:46px;top:744px" width="14" height="14" viewBox="0 0 14 14"><defs><linearGradient id="fg" x1="0" y1="0" x2="0" y2="1"><stop offset="0" stop-color="#fbf0a0"/><stop offset="1" stop-color="#e2c020"/></linearGradient></defs><path d="M1 1.5 H5 L6.5 3 H13 V12 H1Z" fill="#efd868"/><path d="M1 3.5 H13.5 V12.5 H1Z" fill="url(#fg)"/><path d="M13.5 4 V12.5 H1.5" fill="none" stroke="#6a6040" stroke-width="1"/></svg>
<div class="t" style="left:66px;top:745px;font-size:12.5px;letter-spacing:-0.25px;color:#000">Load Cases and Combinations</div>
<div class="a" style="left:54px;top:770px;width:11px;height:1px;background:repeating-linear-gradient(90deg,#808080 0 1px,transparent 1px 2px)"></div>
<div class="a" style="left:49px;top:766px;width:9px;height:9px;background:linear-gradient(#fff,#e4e4e4);border:1px solid #8c8c8c;border-radius:1px"></div><div class="a" style="left:51px;top:770px;width:5px;height:1px;background:#2a40a0"></div><div class="a" style="left:53px;top:768px;width:1px;height:5px;background:#2a40a0"></div>
<svg class="a" style="left:66px;top:763px" width="15" height="15" viewBox="0 0 15 15"><path d="M1 13.5 H13" stroke="#333" stroke-width="1.2"/><path d="M9 4 V10" stroke="#2050c0" stroke-width="1.6"/><path d="M7 9 L9 13 L11 9Z" fill="#2050c0"/></svg>
<div class="t" style="left:85px;top:763px;font-size:12.5px;letter-spacing:-0.25px;color:#000">Load Cases</div>
<div class="a" style="left:54px;top:788px;width:11px;height:1px;background:repeating-linear-gradient(90deg,#808080 0 1px,transparent 1px 2px)"></div>
<div class="a" style="left:49px;top:784px;width:9px;height:9px;background:linear-gradient(#fff,#e4e4e4);border:1px solid #8c8c8c;border-radius:1px"></div><div class="a" style="left:51px;top:788px;width:5px;height:1px;background:#2a40a0"></div><div class="a" style="left:53px;top:786px;width:1px;height:5px;background:#2a40a0"></div>
<svg class="a" style="left:66px;top:781px" width="15" height="15" viewBox="0 0 15 15"><rect x="0.5" y="1.5" width="5" height="3" fill="#fff" stroke="#555" stroke-width="0.7"/><rect x="0.5" y="10.5" width="5" height="3" fill="#fff" stroke="#555" stroke-width="0.7"/><path d="M6 3 H9 V12 H6" fill="none" stroke="#444" stroke-width="0.7" stroke-dasharray="1 0.6"/><rect x="9" y="5" width="5" height="4" fill="#3a80e0"/></svg>
<div class="t" style="left:85px;top:781px;font-size:12.5px;letter-spacing:-0.25px;color:#000">Actions</div>
<div class="a" style="left:54px;top:806px;width:11px;height:1px;background:repeating-linear-gradient(90deg,#808080 0 1px,transparent 1px 2px)"></div>
<div class="a" style="left:49px;top:802px;width:9px;height:9px;background:linear-gradient(#fff,#e4e4e4);border:1px solid #8c8c8c;border-radius:1px"></div><div class="a" style="left:51px;top:806px;width:5px;height:1px;background:#2a40a0"></div><div class="a" style="left:53px;top:804px;width:1px;height:5px;background:#2a40a0"></div>
<svg class="a" style="left:66px;top:799px" width="15" height="15" viewBox="0 0 15 15"><rect x="0.5" y="1.5" width="5" height="3" fill="#fff" stroke="#555" stroke-width="0.7"/><rect x="0.5" y="10.5" width="5" height="3" fill="#fff" stroke="#555" stroke-width="0.7"/><path d="M6 3 H9 V12 H6" fill="none" stroke="#444" stroke-width="0.7" stroke-dasharray="1 0.6"/><rect x="9" y="5" width="5" height="4" fill="#3a70d0"/></svg>
<div class="t" style="left:85px;top:799px;font-size:12.5px;letter-spacing:-0.25px;color:#000">Combination Expressions</div>
<div class="a" style="left:54px;top:824px;width:11px;height:1px;background:repeating-linear-gradient(90deg,#808080 0 1px,transparent 1px 2px)"></div>
<div class="a" style="left:49px;top:820px;width:9px;height:9px;background:linear-gradient(#fff,#e4e4e4);border:1px solid #8c8c8c;border-radius:1px"></div><div class="a" style="left:51px;top:824px;width:5px;height:1px;background:#2a40a0"></div><div class="a" style="left:53px;top:822px;width:1px;height:5px;background:#2a40a0"></div>
<svg class="a" style="left:66px;top:817px" width="15" height="15" viewBox="0 0 15 15"><rect x="0.5" y="1.5" width="5" height="3" fill="#fff" stroke="#555" stroke-width="0.7"/><rect x="0.5" y="10.5" width="5" height="3" fill="#fff" stroke="#555" stroke-width="0.7"/><path d="M6 3 H9 V12 H6" fill="none" stroke="#444" stroke-width="0.7" stroke-dasharray="1 0.6"/><rect x="9" y="5" width="5" height="4" fill="#3a80e0"/></svg>
<div class="t" style="left:85px;top:817px;font-size:12.5px;letter-spacing:-0.25px;color:#000">Action Combinations</div>
<div class="a" style="left:54px;top:842px;width:11px;height:1px;background:repeating-linear-gradient(90deg,#808080 0 1px,transparent 1px 2px)"></div>
<div class="a" style="left:49px;top:838px;width:9px;height:9px;background:linear-gradient(#fff,#e4e4e4);border:1px solid #8c8c8c;border-radius:1px"></div><div class="a" style="left:51px;top:842px;width:5px;height:1px;background:#2a40a0"></div><div class="a" style="left:53px;top:840px;width:1px;height:5px;background:#2a40a0"></div>
<svg class="a" style="left:66px;top:835px" width="15" height="15" viewBox="0 0 15 15"><rect x="0.5" y="1.5" width="5" height="3" fill="#fff" stroke="#555" stroke-width="0.7"/><rect x="0.5" y="10.5" width="5" height="3" fill="#fff" stroke="#555" stroke-width="0.7"/><path d="M6 3 H9 V12 H6" fill="none" stroke="#444" stroke-width="0.7" stroke-dasharray="1 0.6"/><rect x="9" y="5" width="5" height="4" fill="#20a020"/></svg>
<div class="t" style="left:85px;top:835px;font-size:12.5px;letter-spacing:-0.25px;color:#000">Load Combinations</div>
<div class="a" style="left:54px;top:860px;width:11px;height:1px;background:repeating-linear-gradient(90deg,#808080 0 1px,transparent 1px 2px)"></div>
<div class="a" style="left:49px;top:856px;width:9px;height:9px;background:linear-gradient(#fff,#e4e4e4);border:1px solid #8c8c8c;border-radius:1px"></div><div class="a" style="left:51px;top:860px;width:5px;height:1px;background:#2a40a0"></div><div class="a" style="left:53px;top:858px;width:1px;height:5px;background:#2a40a0"></div>
<svg class="a" style="left:66px;top:853px" width="15" height="15" viewBox="0 0 15 15"><rect x="0.5" y="1.5" width="5" height="3" fill="#fff" stroke="#555" stroke-width="0.7"/><rect x="0.5" y="10.5" width="5" height="3" fill="#fff" stroke="#555" stroke-width="0.7"/><path d="M6 3 H9 V12 H6" fill="none" stroke="#444" stroke-width="0.7" stroke-dasharray="1 0.6"/><rect x="9" y="5" width="5" height="4" fill="#3a80e0"/></svg>
<div class="t" style="left:85px;top:853px;font-size:12.5px;letter-spacing:-0.25px;color:#000">Result Combinations</div>
<div class="a" style="left:35px;top:878px;width:10px;height:1px;background:repeating-linear-gradient(90deg,#808080 0 1px,transparent 1px 2px)"></div>
<div class="a" style="left:30px;top:874px;width:9px;height:9px;background:linear-gradient(#fff,#e4e4e4);border:1px solid #8c8c8c;border-radius:1px"></div><div class="a" style="left:32px;top:878px;width:5px;height:1px;background:#2a40a0"></div><div class="a" style="left:34px;top:876px;width:1px;height:5px;background:#2a40a0"></div>
<svg class="a" style="left:46px;top:870px" width="14" height="14" viewBox="0 0 14 14"><defs><linearGradient id="fg" x1="0" y1="0" x2="0" y2="1"><stop offset="0" stop-color="#fbf0a0"/><stop offset="1" stop-color="#e2c020"/></linearGradient></defs><path d="M1 1.5 H5 L6.5 3 H13 V12 H1Z" fill="#efd868"/><path d="M1 3.5 H13.5 V12.5 H1Z" fill="url(#fg)"/><path d="M13.5 4 V12.5 H1.5" fill="none" stroke="#6a6040" stroke-width="1"/></svg>
<div class="t" style="left:66px;top:871px;font-size:12.5px;letter-spacing:-0.25px;color:#000">Loads</div>
<div class="a" style="left:35px;top:896px;width:10px;height:1px;background:repeating-linear-gradient(90deg,#808080 0 1px,transparent 1px 2px)"></div>
<div class="a" style="left:30px;top:892px;width:9px;height:9px;background:linear-gradient(#fff,#e4e4e4);border:1px solid #8c8c8c;border-radius:1px"></div><div class="a" style="left:32px;top:896px;width:5px;height:1px;background:#2a40a0"></div><div class="a" style="left:34px;top:894px;width:1px;height:5px;background:#2a40a0"></div>
<svg class="a" style="left:46px;top:888px" width="14" height="14" viewBox="0 0 14 14"><defs><linearGradient id="fg" x1="0" y1="0" x2="0" y2="1"><stop offset="0" stop-color="#fbf0a0"/><stop offset="1" stop-color="#e2c020"/></linearGradient></defs><path d="M1 1.5 H5 L6.5 3 H13 V12 H1Z" fill="#efd868"/><path d="M1 3.5 H13.5 V12.5 H1Z" fill="url(#fg)"/><path d="M13.5 4 V12.5 H1.5" fill="none" stroke="#6a6040" stroke-width="1"/></svg>
<div class="t" style="left:66px;top:889px;font-size:12.5px;letter-spacing:-0.25px;color:#000">Results</div>
<div class="a" style="left:35px;top:914px;width:10px;height:1px;background:repeating-linear-gradient(90deg,#808080 0 1px,transparent 1px 2px)"></div>
<svg class="a" style="left:46px;top:906px" width="14" height="14" viewBox="0 0 14 14"><defs><linearGradient id="fg" x1="0" y1="0" x2="0" y2="1"><stop offset="0" stop-color="#fbf0a0"/><stop offset="1" stop-color="#e2c020"/></linearGradient></defs><path d="M1 1.5 H5 L6.5 3 H13 V12 H1Z" fill="#efd868"/><path d="M1 3.5 H13.5 V12.5 H1Z" fill="url(#fg)"/><path d="M13.5 4 V12.5 H1.5" fill="none" stroke="#6a6040" stroke-width="1"/></svg>
<div class="t" style="left:66px;top:907px;font-size:12.5px;letter-spacing:-0.25px;color:#000">Sections</div>
<div class="a" style="left:35px;top:932px;width:10px;height:1px;background:repeating-linear-gradient(90deg,#808080 0 1px,transparent 1px 2px)"></div>
<svg class="a" style="left:46px;top:924px" width="14" height="14" viewBox="0 0 14 14"><defs><linearGradient id="fg" x1="0" y1="0" x2="0" y2="1"><stop offset="0" stop-color="#fbf0a0"/><stop offset="1" stop-color="#e2c020"/></linearGradient></defs><path d="M1 1.5 H5 L6.5 3 H13 V12 H1Z" fill="#efd868"/><path d="M1 3.5 H13.5 V12.5 H1Z" fill="url(#fg)"/><path d="M13.5 4 V12.5 H1.5" fill="none" stroke="#6a6040" stroke-width="1"/></svg>
<div class="t" style="left:66px;top:925px;font-size:12.5px;letter-spacing:-0.25px;color:#000">Average Regions</div>
<div class="a" style="left:35px;top:950px;width:10px;height:1px;background:repeating-linear-gradient(90deg,#808080 0 1px,transparent 1px 2px)"></div>
<svg class="a" style="left:46px;top:942px" width="14" height="14" viewBox="0 0 14 14"><defs><linearGradient id="fg" x1="0" y1="0" x2="0" y2="1"><stop offset="0" stop-color="#fbf0a0"/><stop offset="1" stop-color="#e2c020"/></linearGradient></defs><path d="M1 1.5 H5 L6.5 3 H13 V12 H1Z" fill="#efd868"/><path d="M1 3.5 H13.5 V12.5 H1Z" fill="url(#fg)"/><path d="M13.5 4 V12.5 H1.5" fill="none" stroke="#6a6040" stroke-width="1"/></svg>
<div class="t" style="left:66px;top:943px;font-size:12.5px;letter-spacing:-0.25px;color:#000">Printout Reports</div>
<div class="a" style="left:35px;top:968px;width:10px;height:1px;background:repeating-linear-gradient(90deg,#808080 0 1px,transparent 1px 2px)"></div>
<div class="a" style="left:30px;top:964px;width:9px;height:9px;background:linear-gradient(#fff,#e4e4e4);border:1px solid #8c8c8c;border-radius:1px"></div><div class="a" style="left:32px;top:968px;width:5px;height:1px;background:#2a40a0"></div><div class="a" style="left:34px;top:966px;width:1px;height:5px;background:#2a40a0"></div>
<svg class="a" style="left:46px;top:960px" width="14" height="14" viewBox="0 0 14 14"><defs><linearGradient id="fg" x1="0" y1="0" x2="0" y2="1"><stop offset="0" stop-color="#fbf0a0"/><stop offset="1" stop-color="#e2c020"/></linearGradient></defs><path d="M1 1.5 H5 L6.5 3 H13 V12 H1Z" fill="#efd868"/><path d="M1 3.5 H13.5 V12.5 H1Z" fill="url(#fg)"/><path d="M13.5 4 V12.5 H1.5" fill="none" stroke="#6a6040" stroke-width="1"/></svg>
<div class="t" style="left:66px;top:961px;font-size:12.5px;letter-spacing:-0.25px;color:#000">Guide Objects</div>
<div class="a" style="left:5px;top:995px;width:46px;height:20px;background:linear-gradient(#f8f9fb,#eef0f4);border:1px solid #b8e0e8;border-top:none;border-radius:0 0 3px 3px"></div>
<svg class="a" style="left:7px;top:997px" width="16" height="16" viewBox="0 0 16 16"><rect x="3" y="1" width="12" height="9" fill="#fff" stroke="#888" stroke-width="0.6"/><rect x="3" y="1" width="12" height="2" fill="#3a70d0"/><rect x="0" y="4" width="7" height="8" fill="#f0d030"/><circle cx="8" cy="9" r="3.3" fill="#eef" stroke="#3a60a0" stroke-width="1.2"/><path d="M10 11 L14 15" stroke="#a06030" stroke-width="2"/></svg>
<div class="t" style="left:25px;top:1000px;font-size:11.4px;color:#333">Data</div>
<svg class="a" style="left:59px;top:997px" width="16" height="16" viewBox="0 0 16 16"><rect x="1.5" y="3.5" width="12" height="11" fill="#fff" stroke="#333" stroke-width="0.8"/><rect x="3" y="6" width="9" height="7" fill="#3a70d0"/><path d="M4 8 H11 M4 10 H11" stroke="#fff" stroke-width="0.8"/><path d="M3 3 Q8 -1 14 2 L11 5Z" fill="#b09070"/></svg>
<div class="t" style="left:77px;top:1000px;font-size:11.4px;color:#333">Display</div>
<svg class="a" style="left:126px;top:997px" width="16" height="16" viewBox="0 0 16 16"><path d="M3 14 L8 2 L13 14Z" fill="none" stroke="#3a70d0" stroke-width="1.3"/><path d="M1 15 H15" stroke="#3a70d0" stroke-width="1.5"/><path d="M9 6 L14 3" stroke="#3a70d0" stroke-width="1.3"/></svg>
<div class="t" style="left:144px;top:1000px;font-size:11.4px;color:#333">Views</div>
<div class="a" style="left:368px;top:124px;width:1552px;height:692px;background:#d2d6e0"></div>
<div class="a" style="left:372px;top:124px;width:1548px;height:693px;background:#fff;border-top:1px solid #a0a0a0;border-left:1px solid #a0a0a0"></div>
<svg class="a" style="left:373px;top:125px;background:#000" width="1545" height="689" viewBox="373 125 1545 689"><rect x="1412" y="290" width="18" height="155" fill="#b1b1b1"/><rect x="1412" y="290" width="9" height="155" fill="#b8b8b8"/><path d="M1411 444 L1421 445 L1431 443 L1431 447 L1421 449 L1411 448Z" fill="#10a818"/><rect x="933" y="359" width="18" height="155" fill="#b1b1b1"/><rect x="933" y="359" width="9" height="155" fill="#b8b8b8"/><path d="M932 513 L942 514 L952 512 L952 516 L942 518 L932 517Z" fill="#10a818"/><rect x="452" y="428" width="18" height="156" fill="#b1b1b1"/><rect x="452" y="428" width="9" height="156" fill="#b8b8b8"/><path d="M451 583 L461 584 L471 582 L471 586 L461 588 L451 587Z" fill="#10a818"/><polygon points="942.0,359.0 1181.5,309.5 1421.0,290.0 1421.0,315.0 942.0,383.0" fill="#b3b3b3"/><polyline points="942,359 1181.5,309.5 1421,290" fill="none" stroke="#5e5e5e" stroke-width="3.2" stroke-linejoin="bevel"/><line x1="942.0" y1="379.0" x2="1421.0" y2="311.0" stroke="#8a8a8a" stroke-width="0.8"/><line x1="942.0" y1="383.0" x2="1421.0" y2="315.0" stroke="#c4c4c4" stroke-width="1"/><line x1="1181.5" y1="310.5" x2="1181.5" y2="324.5" stroke="#e02020" stroke-width="1"/><line x1="1178.5" y1="310.5" x2="1181.5" y2="310.5" stroke="#e02020" stroke-width="1"/><polygon points="461.0,428.0 701.5,378.5 942.0,359.0 942.0,384.0 461.0,452.0" fill="#b3b3b3"/><polyline points="461,428 701.5,378.5 942,359" fill="none" stroke="#5e5e5e" stroke-width="3.2" stroke-linejoin="bevel"/><line x1="461.0" y1="448.0" x2="942.0" y2="380.0" stroke="#8a8a8a" stroke-width="0.8"/><line x1="461.0" y1="452.0" x2="942.0" y2="384.0" stroke="#c4c4c4" stroke-width="1"/><line x1="701.5" y1="379.5" x2="701.5" y2="393.5" stroke="#e02020" stroke-width="1"/><line x1="698.5" y1="379.5" x2="701.5" y2="379.5" stroke="#e02020" stroke-width="1"/><polygon points="1421.0,290.0 1626.0,328.0 1626.0,345.0 1421.0,307.0" fill="#b0b0b0"/><line x1="1421.0" y1="290.0" x2="1626.0" y2="328.0" stroke="#5e5e5e" stroke-width="3.2"/><polygon points="942.0,359.0 1146.0,398.0 1146.0,415.0 942.0,376.0" fill="#b0b0b0"/><line x1="942.0" y1="359.0" x2="1146.0" y2="398.0" stroke="#5e5e5e" stroke-width="3.2"/><polygon points="461.0,428.0 666.0,467.0 666.0,484.0 461.0,445.0" fill="#b0b0b0"/><line x1="461.0" y1="428.0" x2="666.0" y2="467.0" stroke="#5e5e5e" stroke-width="3.2"/><rect x="1617" y="328" width="18" height="157" fill="#b1b1b1"/><rect x="1617" y="328" width="9" height="157" fill="#b8b8b8"/><path d="M1616 484 L1626 485 L1636 483 L1636 487 L1626 489 L1616 488Z" fill="#10a818"/><rect x="1137" y="398" width="18" height="156" fill="#b1b1b1"/><rect x="1137" y="398" width="9" height="156" fill="#b8b8b8"/><path d="M1136 553 L1146 554 L1156 552 L1156 556 L1146 558 L1136 557Z" fill="#10a818"/><rect x="657" y="467" width="18" height="156" fill="#b1b1b1"/><rect x="657" y="467" width="9" height="156" fill="#b8b8b8"/><path d="M656 622 L666 623 L676 621 L676 625 L666 627 L656 626Z" fill="#10a818"/><polygon points="1146.0,398.0 1386.0,348.0 1626.0,328.0 1626.0,353.0 1146.0,422.0" fill="#b3b3b3"/><polyline points="1146,398 1386.0,348.0 1626,328" fill="none" stroke="#5e5e5e" stroke-width="3.2" stroke-linejoin="bevel"/><line x1="1146.0" y1="418.0" x2="1626.0" y2="349.0" stroke="#8a8a8a" stroke-width="0.8"/><line x1="1146.0" y1="422.0" x2="1626.0" y2="353.0" stroke="#c4c4c4" stroke-width="1"/><line x1="1386.0" y1="349.0" x2="1386.0" y2="363.0" stroke="#e02020" stroke-width="1"/><line x1="1383.0" y1="349.0" x2="1386.0" y2="349.0" stroke="#e02020" stroke-width="1"/><polygon points="666.0,467.0 906.0,417.5 1146.0,398.0 1146.0,423.0 666.0,491.0" fill="#b3b3b3"/><polyline points="666,467 906.0,417.5 1146,398" fill="none" stroke="#5e5e5e" stroke-width="3.2" stroke-linejoin="bevel"/><line x1="666.0" y1="487.0" x2="1146.0" y2="419.0" stroke="#8a8a8a" stroke-width="0.8"/><line x1="666.0" y1="491.0" x2="1146.0" y2="423.0" stroke="#c4c4c4" stroke-width="1"/><line x1="906.0" y1="418.5" x2="906.0" y2="432.5" stroke="#e02020" stroke-width="1"/><line x1="903.0" y1="418.5" x2="906.0" y2="418.5" stroke="#e02020" stroke-width="1"/><polygon points="1626.0,328.0 1830.0,368.0 1830.0,385.0 1626.0,345.0" fill="#b0b0b0"/><line x1="1626.0" y1="328.0" x2="1830.0" y2="368.0" stroke="#5e5e5e" stroke-width="3.2"/><polygon points="1146.0,398.0 1350.0,437.0 1350.0,454.0 1146.0,415.0" fill="#b0b0b0"/><line x1="1146.0" y1="398.0" x2="1350.0" y2="437.0" stroke="#5e5e5e" stroke-width="3.2"/><polygon points="666.0,467.0 871.0,507.0 871.0,524.0 666.0,484.0" fill="#b0b0b0"/><line x1="666.0" y1="467.0" x2="871.0" y2="507.0" stroke="#5e5e5e" stroke-width="3.2"/><rect x="1821" y="368" width="18" height="156" fill="#b1b1b1"/><rect x="1821" y="368" width="9" height="156" fill="#b8b8b8"/><path d="M1820 523 L1830 524 L1840 522 L1840 526 L1830 528 L1820 527Z" fill="#10a818"/><rect x="1341" y="437" width="18" height="153" fill="#b1b1b1"/><rect x="1341" y="437" width="9" height="153" fill="#b8b8b8"/><path d="M1340 589 L1350 590 L1360 588 L1360 592 L1350 594 L1340 593Z" fill="#10a818"/><rect x="862" y="507" width="18" height="154" fill="#b1b1b1"/><rect x="862" y="507" width="9" height="154" fill="#b8b8b8"/><path d="M861 660 L871 661 L881 659 L881 663 L871 665 L861 664Z" fill="#10a818"/><polygon points="1350.0,437.0 1590.0,387.5 1830.0,368.0 1830.0,393.0 1350.0,461.0" fill="#b3b3b3"/><polyline points="1350,437 1590.0,387.5 1830,368" fill="none" stroke="#5e5e5e" stroke-width="3.2" stroke-linejoin="bevel"/><line x1="1350.0" y1="457.0" x2="1830.0" y2="389.0" stroke="#8a8a8a" stroke-width="0.8"/><line x1="1350.0" y1="461.0" x2="1830.0" y2="393.0" stroke="#c4c4c4" stroke-width="1"/><line x1="1590.0" y1="388.5" x2="1590.0" y2="402.5" stroke="#e02020" stroke-width="1"/><line x1="1587.0" y1="388.5" x2="1590.0" y2="388.5" stroke="#e02020" stroke-width="1"/><polygon points="871.0,507.0 1110.5,457.0 1350.0,437.0 1350.0,462.0 871.0,531.0" fill="#b3b3b3"/><polyline points="871,507 1110.5,457.0 1350,437" fill="none" stroke="#5e5e5e" stroke-width="3.2" stroke-linejoin="bevel"/><line x1="871.0" y1="527.0" x2="1350.0" y2="458.0" stroke="#8a8a8a" stroke-width="0.8"/><line x1="871.0" y1="531.0" x2="1350.0" y2="462.0" stroke="#c4c4c4" stroke-width="1"/><line x1="1110.5" y1="458.0" x2="1110.5" y2="472.0" stroke="#e02020" stroke-width="1"/><line x1="1107.5" y1="458.0" x2="1110.5" y2="458.0" stroke="#e02020" stroke-width="1"/><polyline points="875,507 1110.5,457.0 1347,437" fill="none" stroke="#ffff20" stroke-width="1.4"/><polyline points="875,510 1110.5,460.0 1347,440" fill="none" stroke="#ffff20" stroke-width="0.8"/><line x1="875.0" y1="531.0" x2="1347.0" y2="463.0" stroke="#ffff20" stroke-width="1.4"/><line x1="875.0" y1="528.0" x2="1347.0" y2="460.0" stroke="#ffff20" stroke-width="0.8"/><line x1="875.0" y1="507.0" x2="875.0" y2="531.0" stroke="#ffff20" stroke-width="1"/><line x1="879.0" y1="506.0" x2="879.0" y2="530.0" stroke="#ffff20" stroke-width="1"/><line x1="1107.5" y1="457.0" x2="1107.5" y2="497.0" stroke="#ffff20" stroke-width="1"/><line x1="1111.5" y1="457.0" x2="1111.5" y2="497.0" stroke="#ffff20" stroke-width="1"/><line x1="1347.0" y1="437.0" x2="1347.0" y2="463.0" stroke="#ffff20" stroke-width="1"/><line x1="1351.0" y1="436.0" x2="1351.0" y2="462.0" stroke="#ffff20" stroke-width="1"/><circle cx="465" cy="436" r="2.4" fill="#000" stroke="#9cc8f0" stroke-width="0.6"/><circle cx="470" cy="440" r="2.4" fill="#000" stroke="#9cc8f0" stroke-width="0.6"/><path d="M659 469.8 L662.2 473 L659 476.2 L655.8 473Z" fill="#000" stroke="#9cc8f0" stroke-width="0.6"/><circle cx="670" cy="475" r="2.4" fill="#000" stroke="#9cc8f0" stroke-width="0.6"/><circle cx="675" cy="479" r="2.4" fill="#000" stroke="#9cc8f0" stroke-width="0.6"/><path d="M866 507.8 L869.2 511 L866 514.2 L862.8 511Z" fill="#000" stroke="#9cc8f0" stroke-width="0.6"/><circle cx="880" cy="517" r="2.4" fill="#000" stroke="#9cc8f0" stroke-width="0.6"/><path d="M1138 400.8 L1141.2 404 L1138 407.2 L1134.8 404Z" fill="#000" stroke="#9cc8f0" stroke-width="0.6"/><circle cx="1148" cy="406" r="2.4" fill="#000" stroke="#9cc8f0" stroke-width="0.6"/><path d="M1156 405.8 L1159.2 409 L1156 412.2 L1152.8 409Z" fill="#000" stroke="#9cc8f0" stroke-width="0.6"/><path d="M1132 409.8 L1135.2 413 L1132 416.2 L1128.8 413Z" fill="#000" stroke="#9cc8f0" stroke-width="0.6"/><circle cx="1412" cy="304" r="2.4" fill="#000" stroke="#9cc8f0" stroke-width="0.6"/><circle cx="1422" cy="302" r="2.4" fill="#000" stroke="#9cc8f0" stroke-width="0.6"/><path d="M1619 334.8 L1622.2 338 L1619 341.2 L1615.8 338Z" fill="#000" stroke="#9cc8f0" stroke-width="0.6"/><circle cx="1616" cy="346" r="2.4" fill="#000" stroke="#9cc8f0" stroke-width="0.6"/><circle cx="1632" cy="340" r="2.4" fill="#000" stroke="#9cc8f0" stroke-width="0.6"/><path d="M1824 371.8 L1827.2 375 L1824 378.2 L1820.8 375Z" fill="#000" stroke="#9cc8f0" stroke-width="0.6"/><circle cx="1822" cy="383" r="2.4" fill="#000" stroke="#9cc8f0" stroke-width="0.6"/><path d="M1340 448.8 L1343.2 452 L1340 455.2 L1336.8 452Z" fill="#000" stroke="#9cc8f0" stroke-width="0.6"/><path d="M1343 433.8 L1346.2 437 L1343 440.2 L1339.8 437Z" fill="#000" stroke="#9cc8f0" stroke-width="0.6"/><circle cx="1362" cy="449" r="2.4" fill="#000" stroke="#9cc8f0" stroke-width="0.6"/><circle cx="1141" cy="410" r="2.4" fill="#000" stroke="#9cc8f0" stroke-width="0.6"/><rect x="459" y="426" width="4" height="2" fill="#f01010"/><rect x="940" y="357" width="4" height="2" fill="#f01010"/><rect x="1419" y="288" width="4" height="2" fill="#f01010"/><rect x="664" y="465" width="4" height="2" fill="#f01010"/><rect x="1144" y="396" width="4" height="2" fill="#f01010"/><rect x="1624" y="326" width="4" height="2" fill="#f01010"/><rect x="869" y="505" width="4" height="2" fill="#f01010"/><rect x="1348" y="435" width="4" height="2" fill="#f01010"/><rect x="1828" y="366" width="4" height="2" fill="#f01010"/><text x="979" y="551" font-family="Liberation Sans" font-size="46" textLength="48" lengthAdjust="spacingAndGlyphs" fill="#ff0000">37</text><text x="1222.5" y="526.5" font-family="Liberation Sans" font-size="46" textLength="49" lengthAdjust="spacingAndGlyphs" fill="#ff0000">38</text><line x1="1416.0" y1="317.0" x2="1441.0" y2="321.5" stroke="#e01010" stroke-width="2"/><path d="M1436 318 L1445 322 L1436 325Z" fill="#c00"/><line x1="1416.0" y1="317.0" x2="1390.0" y2="320.0" stroke="#10d010" stroke-width="2"/><path d="M1394 316 L1386 320 L1394 323Z" fill="#0a0"/><line x1="1416.0" y1="317.0" x2="1416.0" y2="350.0" stroke="#10e0e0" stroke-width="2"/><path d="M1412 348 L1416 358 L1420 348Z" fill="#0aa"/><text x="1376" y="326" font-family="Liberation Sans" font-size="9" fill="#10d010">Y</text><text x="1446" y="327" font-family="Liberation Sans" font-size="9" fill="#f01010">X</text><text x="1413" y="371" font-family="Liberation Sans" font-size="9" fill="#10e0e0">Z</text><line x1="429.0" y1="691.0" x2="452.0" y2="695.0" stroke="#ff1010" stroke-width="2.2"/><path d="M449 691.5 L457 695.5 L449 698Z" fill="#d00"/><line x1="429.0" y1="691.0" x2="403.0" y2="694.0" stroke="#10ff10" stroke-width="2.2"/><path d="M406 690.5 L397 695 L406 698Z" fill="#0b0"/><line x1="429.0" y1="691.0" x2="429.0" y2="723.0" stroke="#10f0f0" stroke-width="2.2"/><path d="M425.5 721 L429 731 L432.5 721Z" fill="#0bb"/><text x="387" y="700.5" font-family="Liberation Sans" font-size="9" fill="#10e010">Y</text><text x="459" y="701.5" font-family="Liberation Sans" font-size="9" fill="#f01010">X</text><text x="426" y="744" font-family="Liberation Sans" font-size="9" fill="#10e0e0">Z</text></svg>
<div class="a" style="left:373px;top:125px;width:1545px;height:689px;box-shadow:inset 1px 1px 0 #696969"></div>
<div class="a" style="left:368px;top:816px;width:1552px;height:202px;background:#d0d5de"></div>
<div class="a" style="left:372px;top:821px;width:1546px;height:19px;background:#b9c1cc"></div>
<div class="t" style="left:376px;top:824px;font-size:11.6px;color:#3a3a3a">1.1 Nodes</div>
<svg class="a" style="left:1889px;top:824px" width="10" height="12" viewBox="0 0 10 12"><path d="M2.5 1.5 H7.5 V7.5 H2.5Z M5 7.5 V11 M1 7.5 H9 M6 1.5 V7.5" fill="none" stroke="#606060" stroke-width="1.1"/></svg>
<svg class="a" style="left:1905px;top:825px" width="10" height="10" viewBox="0 0 10 10"><path d="M1 1 L9 9 M9 1 L1 9" stroke="#606060" stroke-width="1.3"/></svg>
<div class="a" style="left:372px;top:840px;width:1546px;height:25px;background:linear-gradient(#eef1f8,#e6eaf3 40%,#d6dbe4)"></div>
<div class="a" style="left:380px;top:843px;width:21px;height:19px;background:linear-gradient(#e2c49a 0,#fde6c4 10%,#fbd8a8 28%,#f7ae4e 45%,#fbcc72 68%,#fff0a8 90%,#ffffff 100%);border:1px solid #8ea2b2;border-top-color:#d8b888"></div>
<div class="a" style="left:549px;top:843px;width:21px;height:19px;background:linear-gradient(#e2c49a 0,#fde6c4 10%,#fbd8a8 28%,#f7ae4e 45%,#fbcc72 68%,#fff0a8 90%,#ffffff 100%);border:1px solid #8ea2b2;border-top-color:#d8b888"></div>
<div class="a" style="left:571px;top:843px;width:21px;height:19px;background:linear-gradient(#e2c49a 0,#fde6c4 10%,#fbd8a8 28%,#f7ae4e 45%,#fbcc72 68%,#fff0a8 90%,#ffffff 100%);border:1px solid #8ea2b2;border-top-color:#d8b888"></div>
<svg class="a" style="left:383px;top:844px" width="16" height="16" viewBox="0 0 16 16"><rect x="1.5" y="1.5" width="13" height="13" fill="#f4f4f4" stroke="#555"/><rect x="2" y="2" width="12" height="2.2" fill="#3a58b0"/><path d="M3 13 L13 4 V13Z" fill="#40a040"/><path d="M3 13 L13 4" stroke="#e02020"/></svg>
<svg class="a" style="left:405px;top:844px" width="16" height="16" viewBox="0 0 16 16"><rect x="1.5" y="1.5" width="13" height="13" fill="#f4f4f4" stroke="#555"/><rect x="2" y="2" width="12" height="2.2" fill="#3a58b0"/><path d="M2 6 H14 M2 10 H14 M6 2 V14 M10 2 V14" stroke="#999" stroke-width="0.6"/><path d="M8 4 V12 M4 8 H12" stroke="#2050c0" stroke-width="1.6"/></svg>
<svg class="a" style="left:427px;top:844px" width="16" height="16" viewBox="0 0 16 16"><rect x="1.5" y="1.5" width="13" height="13" fill="#f4f4f4" stroke="#555"/><rect x="2" y="2" width="12" height="2.2" fill="#3a58b0"/><path d="M2 6 H14 M2 10 H14" stroke="#999" stroke-width="0.6"/><path d="M8 3 V12 M5 9 L8 13 L11 9" stroke="#222" stroke-width="1.2" fill="none"/></svg>
<svg class="a" style="left:449px;top:844px" width="16" height="16" viewBox="0 0 16 16"><rect x="1.5" y="1.5" width="13" height="13" fill="#f4f4f4" stroke="#555"/><rect x="2" y="2" width="12" height="2.2" fill="#3a58b0"/><path d="M2 10 L14 5" stroke="#e02020" stroke-width="1.5"/><path d="M2 12 H14" stroke="#2050c0" stroke-width="1.2"/></svg>
<svg class="a" style="left:471px;top:844px" width="16" height="16" viewBox="0 0 16 16"><rect x="1.5" y="1.5" width="13" height="13" fill="#f4f4f4" stroke="#bbb"/><path d="M2 8 L5 5 L8 10 L11 5 L14 8" stroke="#e08080" stroke-width="1" fill="none"/></svg>
<svg class="a" style="left:501px;top:844px" width="16" height="16" viewBox="0 0 16 16"><rect x="1.5" y="2.5" width="13" height="11" fill="#f4f4f4" stroke="#555"/><rect x="2" y="2" width="12" height="2.2" fill="#3a58b0"/><path d="M12 8 H4 M7 5 L4 8 L7 11" stroke="#2050c0" stroke-width="1.6" fill="none"/></svg>
<svg class="a" style="left:523px;top:844px" width="16" height="16" viewBox="0 0 16 16"><rect x="1.5" y="2.5" width="13" height="11" fill="#f4f4f4" stroke="#555"/><rect x="2" y="2" width="12" height="2.2" fill="#3a58b0"/><path d="M4 8 H12 M9 5 L12 8 L9 11" stroke="#2050c0" stroke-width="1.6" fill="none"/></svg>
<svg class="a" style="left:552px;top:844px" width="16" height="16" viewBox="0 0 16 16"><path d="M4 3 Q12 3 11 9 Q10 14 5 13" stroke="#222" stroke-width="1.6" fill="none"/><path d="M2 2 L7 1 L5 6Z" fill="#222"/></svg>
<svg class="a" style="left:574px;top:844px" width="16" height="16" viewBox="0 0 16 16"><path d="M4 3 Q12 3 11 9 Q10 14 5 13" stroke="#222" stroke-width="1.6" fill="none"/><path d="M2 2 L7 1 L5 6Z" fill="#222"/></svg>
<svg class="a" style="left:596px;top:844px" width="16" height="16" viewBox="0 0 16 16"><path d="M4 4 Q10 0 13 6 M12 12 Q6 16 3 10" stroke="#8aa0c8" stroke-width="1.8" fill="none"/></svg>
<svg class="a" style="left:627px;top:844px" width="16" height="16" viewBox="0 0 16 16"><rect x="2" y="2" width="12" height="12" fill="#dde4f4" stroke="#a8b4d0"/><path d="M8 4 V12 M4 8 H12" stroke="#90a8e0" stroke-width="1.8"/></svg>
<svg class="a" style="left:649px;top:844px" width="16" height="16" viewBox="0 0 16 16"><rect x="2" y="2" width="12" height="12" fill="#dde4f4" stroke="#a8b4d0"/><circle cx="8" cy="8" r="3" fill="#90a8e0"/></svg>
<svg class="a" style="left:671px;top:844px" width="16" height="16" viewBox="0 0 16 16"><rect x="2" y="2" width="12" height="12" fill="#dde4f4" stroke="#a8b4d0"/><path d="M8 4 V12" stroke="#90a8e0" stroke-width="1.8"/></svg>
<svg class="a" style="left:701px;top:844px" width="16" height="16" viewBox="0 0 16 16"><rect x="2" y="2" width="12" height="12" fill="#dde4f4" stroke="#a8b4d0"/><path d="M4 4 L12 12 M12 4 L4 12" stroke="#90a0c0" stroke-width="1.2"/></svg>
<svg class="a" style="left:731px;top:844px" width="16" height="16" viewBox="0 0 16 16"><path d="M1 6 H8 M1 10 H8" stroke="#555" stroke-width="1.5"/><path d="M7 3 L15 13 M15 3 L7 13" stroke="#e02020" stroke-width="1.8"/></svg>
<svg class="a" style="left:753px;top:844px" width="16" height="16" viewBox="0 0 16 16"><path d="M1 8 H10" stroke="#e02020" stroke-width="1.8"/><path d="M4 5 L1 8 L4 11" stroke="#e02020" stroke-width="1.5" fill="none"/><path d="M10 4 H15 M10 12 H15 M11 6 H15 M11 10 H15" stroke="#555" stroke-width="1.2"/></svg>
<svg class="a" style="left:775px;top:844px" width="16" height="16" viewBox="0 0 16 16"><path d="M6 8 H15" stroke="#e02020" stroke-width="1.8"/><path d="M12 5 L15 8 L12 11" stroke="#e02020" stroke-width="1.5" fill="none"/><path d="M1 4 H6 M1 12 H6 M1 6 H5 M1 10 H5" stroke="#555" stroke-width="1.2"/></svg>
<svg class="a" style="left:805px;top:844px" width="16" height="16" viewBox="0 0 16 16"><rect x="1.5" y="1.5" width="13" height="13" fill="#fff" stroke="#555"/><rect x="2" y="2" width="12" height="4" fill="#f0e060"/><path d="M2 9 H14 M2 12 H14 M8 6 V14" stroke="#888" stroke-width="0.7"/></svg>
<svg class="a" style="left:827px;top:844px" width="16" height="16" viewBox="0 0 16 16"><rect x="1.5" y="2.5" width="13" height="11" fill="#e8eef8" stroke="#6080b0"/><path d="M2 6 H14 M2 9 H14 M6 3 V13 M10 3 V13" stroke="#6080b0" stroke-width="0.8"/></svg>
<svg class="a" style="left:857px;top:844px" width="16" height="16" viewBox="0 0 16 16"><rect x="1.5" y="1.5" width="13" height="13" fill="#f0e070" stroke="#777"/><path d="M5 13 L13 3" stroke="#222" stroke-width="1.8"/><path d="M3 14 H13" stroke="#222" stroke-width="1"/></svg>
<svg class="a" style="left:887px;top:844px" width="16" height="16" viewBox="0 0 16 16"><path d="M2 8 L5 4 H14 L14 13 H2Z" fill="#e8e0d0" stroke="#555" stroke-width="0.8"/><rect x="5" y="1" width="8" height="5" fill="#fff" stroke="#555" stroke-width="0.6"/><path d="M4 10 H12" stroke="#555"/></svg>
<svg class="a" style="left:909px;top:844px" width="16" height="16" viewBox="0 0 16 16"><circle cx="5" cy="10" r="3" fill="none" stroke="#3a5080" stroke-width="1.5"/><circle cx="12" cy="10" r="3" fill="none" stroke="#3a5080" stroke-width="1.5"/><path d="M2 4 L5 8" stroke="#3a5080" stroke-width="1.3"/></svg>
<svg class="a" style="left:931px;top:844px" width="16" height="16" viewBox="0 0 16 16"><rect x="1" y="1" width="14" height="14" fill="#fff" stroke="#1a7a3a"/><rect x="2" y="2" width="12" height="12" fill="#1f8a40"/><path d="M5 4 L11 12 M11 4 L5 12" stroke="#fff" stroke-width="1.8"/></svg>
<svg class="a" style="left:953px;top:844px" width="16" height="16" viewBox="0 0 16 16"><rect x="1" y="3" width="14" height="11" fill="#333"/><path d="M3 8 H13 M3 11 H13" stroke="#ddd" stroke-width="1.2" stroke-dasharray="1.5 1"/><rect x="2" y="4" width="12" height="2" fill="#999"/></svg>
<svg class="a" style="left:983px;top:844px" width="16" height="16" viewBox="0 0 16 16"><text x="0" y="15" font-size="7" font-style="italic" font-family="Liberation Serif" fill="#222">ab=</text><rect x="6" y="1" width="9" height="6" fill="#fff" stroke="#333" stroke-width="0.7"/><rect x="6" y="1" width="9" height="1.5" fill="#2a3a8a"/></svg>
<svg class="a" style="left:1005px;top:844px" width="16" height="16" viewBox="0 0 16 16"><text x="1" y="13" font-size="13" font-style="italic" font-family="Liberation Serif" fill="#555">fx</text></svg>
<svg class="a" style="left:1027px;top:844px" width="16" height="16" viewBox="0 0 16 16"><text x="1" y="13" font-size="13" font-style="italic" font-family="Liberation Serif" fill="#888">fx</text><path d="M2 2 L10 10 M10 2 L2 10" stroke="#e04040" stroke-width="1"/></svg>
<svg class="a" style="left:1057px;top:844px" width="16" height="16" viewBox="0 0 16 16"><path d="M4 7 V4 Q8 0 12 4" stroke="#8aa0c8" stroke-width="1.6" fill="none"/><rect x="3" y="7" width="10" height="8" rx="1" fill="#a8bce0" stroke="#6a80b0" stroke-width="0.7"/></svg>
<div class="a" style="left:492px;top:845px;width:1px;height:16px;background:#a9afba;box-shadow:1px 0 0 #fff"></div>
<div class="a" style="left:543px;top:845px;width:1px;height:16px;background:#a9afba;box-shadow:1px 0 0 #fff"></div>
<div class="a" style="left:617px;top:845px;width:1px;height:16px;background:#a9afba;box-shadow:1px 0 0 #fff"></div>
<div class="a" style="left:692px;top:845px;width:1px;height:16px;background:#a9afba;box-shadow:1px 0 0 #fff"></div>
<div class="a" style="left:722px;top:845px;width:1px;height:16px;background:#a9afba;box-shadow:1px 0 0 #fff"></div>
<div class="a" style="left:796px;top:845px;width:1px;height:16px;background:#a9afba;box-shadow:1px 0 0 #fff"></div>
<div class="a" style="left:848px;top:845px;width:1px;height:16px;background:#a9afba;box-shadow:1px 0 0 #fff"></div>
<div class="a" style="left:877px;top:845px;width:1px;height:16px;background:#a9afba;box-shadow:1px 0 0 #fff"></div>
<div class="a" style="left:974px;top:845px;width:1px;height:16px;background:#a9afba;box-shadow:1px 0 0 #fff"></div>
<div class="a" style="left:1048px;top:845px;width:1px;height:16px;background:#a9afba;box-shadow:1px 0 0 #fff"></div>
<div class="a" style="left:372px;top:865px;width:1546px;height:153px;background:#f0f0f0;border-top:1px solid #6e6e6e"></div>
<div class="a" style="left:372px;top:866px;width:1546px;height:2px;background:#fff"></div>
<div class="a" style="left:376px;top:869px;width:1523px;height:17px;background:#e4e4e4;border-bottom:1px solid #7a7a7a"></div>
<div class="a" style="left:376px;top:886px;width:1523px;height:38px;background:#f0f0f0;border-bottom:1px solid #a0a0a0"></div>
<div class="a" style="left:376px;top:869px;width:53px;height:55px;background:#e4e4e4;border-bottom:1px solid #a0a0a0"></div>
<div class="a" style="left:429px;top:870px;width:99px;height:15px;background:#3399ff"></div>
<div class="t" style="left:429px;top:871px;width:99px;text-align:center;font-size:13px;color:#fff">A</div>
<div class="t" style="left:528px;top:871px;width:86px;text-align:center;font-size:13px;color:#111">B</div>
<div class="t" style="left:614px;top:871px;width:108px;text-align:center;font-size:13px;color:#111">C</div>
<div class="t" style="left:722px;top:871px;width:93px;text-align:center;font-size:13px;color:#111">D</div>
<div class="t" style="left:815px;top:871px;width:93px;text-align:center;font-size:13px;color:#111">E</div>
<div class="t" style="left:908px;top:871px;width:93px;text-align:center;font-size:13px;color:#111">F</div>
<div class="t" style="left:1001px;top:871px;width:898px;text-align:center;font-size:13px;color:#111">G</div>
<div class="a" style="left:375px;top:869px;width:1px;height:94px;background:#a0a0a0"></div>
<div class="a" style="left:428px;top:869px;width:1px;height:94px;background:#a0a0a0"></div>
<div class="a" style="left:527px;top:869px;width:1px;height:94px;background:#a0a0a0"></div>
<div class="a" style="left:613px;top:869px;width:1px;height:94px;background:#a0a0a0"></div>
<div class="a" style="left:721px;top:869px;width:1px;height:94px;background:#a0a0a0"></div>
<div class="a" style="left:814px;top:869px;width:1px;height:94px;background:#a0a0a0"></div>
<div class="a" style="left:907px;top:869px;width:1px;height:94px;background:#a0a0a0"></div>
<div class="a" style="left:1000px;top:869px;width:1px;height:94px;background:#a0a0a0"></div>
<div class="a" style="left:1898px;top:869px;width:1px;height:94px;background:#a0a0a0"></div>
<div class="a" style="left:376px;top:869px;width:1px;height:94px;background:#7a7a7a"></div>
<div class="a" style="left:376px;top:869px;width:1523px;height:1px;background:#7a7a7a"></div>
<div class="a" style="left:722px;top:887px;width:278px;height:17px;background:#f0f0f0"></div>
<div class="t" style="left:376px;top:888px;width:53px;text-align:center;font-size:13px;color:#111">Node</div>
<div class="t" style="left:376px;top:906px;width:53px;text-align:center;font-size:13px;color:#111">No.</div>
<div class="t" style="left:429px;top:907px;width:99px;text-align:center;font-size:13px;color:#111">Node Type</div>
<div class="t" style="left:528px;top:888px;width:86px;text-align:center;font-size:13px;color:#111">Reference</div>
<div class="t" style="left:528px;top:907px;width:86px;text-align:center;font-size:13px;color:#111">Node</div>
<div class="t" style="left:614px;top:888px;width:108px;text-align:center;font-size:13px;color:#111">Coordinate</div>
<div class="t" style="left:614px;top:907px;width:108px;text-align:center;font-size:13px;color:#111">System</div>
<div class="t" style="left:722px;top:888px;width:279px;text-align:center;font-size:13.5px;color:#111">Node Coordinates</div>
<div class="t" style="left:722px;top:907px;width:93px;text-align:center;font-size:13px;color:#111">X [m]</div>
<div class="t" style="left:815px;top:907px;width:93px;text-align:center;font-size:13px;color:#111">Y [m]</div>
<div class="t" style="left:908px;top:907px;width:93px;text-align:center;font-size:13px;color:#111">Z [m]</div>
<div class="t" style="left:1001px;top:907px;width:898px;text-align:center;font-size:13px;color:#111">Comment</div>
<div class="a" style="left:429px;top:924px;width:1470px;height:19px;background:#fff;border-bottom:1px solid #a0a0a0"></div>
<div class="a" style="left:377px;top:925px;width:51px;height:17px;background:#3399ff;border-right:1px solid #7a7a7a;border-bottom:1px solid #7a7a7a"></div>
<div class="t" style="left:376px;top:928px;width:53px;text-align:center;font-size:13px;color:#fff">1</div>
<div class="t" style="left:433px;top:928px;font-size:13px;color:#111">Standard</div>
<div class="t" style="left:528px;top:928px;width:86px;text-align:center;font-size:13px;color:#111">0</div>
<div class="t" style="left:619px;top:928px;font-size:13px;color:#111"><span style="text-decoration:underline">C</span>artesian</div>
<div class="t" style="left:722px;top:928px;width:89px;text-align:right;font-size:13px;color:#111">0.000</div>
<div class="t" style="left:815px;top:928px;width:89px;text-align:right;font-size:13px;color:#111">20.000</div>
<div class="t" style="left:908px;top:928px;width:89px;text-align:right;font-size:13px;color:#111">0.000</div>
<div class="a" style="left:428px;top:924px;width:1px;height:19px;background:#a0a0a0"></div>
<div class="a" style="left:527px;top:924px;width:1px;height:19px;background:#a0a0a0"></div>
<div class="a" style="left:613px;top:924px;width:1px;height:19px;background:#a0a0a0"></div>
<div class="a" style="left:721px;top:924px;width:1px;height:19px;background:#a0a0a0"></div>
<div class="a" style="left:814px;top:924px;width:1px;height:19px;background:#a0a0a0"></div>
<div class="a" style="left:907px;top:924px;width:1px;height:19px;background:#a0a0a0"></div>
<div class="a" style="left:1000px;top:924px;width:1px;height:19px;background:#a0a0a0"></div>
<div class="a" style="left:1898px;top:924px;width:1px;height:19px;background:#a0a0a0"></div>
<div class="a" style="left:429px;top:943px;width:1470px;height:19px;background:#fff;border-bottom:1px solid #a0a0a0"></div>
<div class="a" style="left:377px;top:944px;width:51px;height:17px;background:#e4e4e4;border-right:1px solid #7a7a7a;border-bottom:1px solid #7a7a7a"></div>
<div class="t" style="left:376px;top:947px;width:53px;text-align:center;font-size:13px;color:#111">2</div>
<div class="t" style="left:433px;top:947px;font-size:13px;color:#111">Standard</div>
<div class="t" style="left:528px;top:947px;width:86px;text-align:center;font-size:13px;color:#111">0</div>
<div class="t" style="left:619px;top:947px;font-size:13px;color:#111"><span style="text-decoration:underline">C</span>artesian</div>
<div class="t" style="left:722px;top:947px;width:89px;text-align:right;font-size:13px;color:#111">0.000</div>
<div class="t" style="left:815px;top:947px;width:89px;text-align:right;font-size:13px;color:#111">10.000</div>
<div class="t" style="left:908px;top:947px;width:89px;text-align:right;font-size:13px;color:#111">0.000</div>
<div class="a" style="left:428px;top:943px;width:1px;height:19px;background:#a0a0a0"></div>
<div class="a" style="left:527px;top:943px;width:1px;height:19px;background:#a0a0a0"></div>
<div class="a" style="left:613px;top:943px;width:1px;height:19px;background:#a0a0a0"></div>
<div class="a" style="left:721px;top:943px;width:1px;height:19px;background:#a0a0a0"></div>
<div class="a" style="left:814px;top:943px;width:1px;height:19px;background:#a0a0a0"></div>
<div class="a" style="left:907px;top:943px;width:1px;height:19px;background:#a0a0a0"></div>
<div class="a" style="left:1000px;top:943px;width:1px;height:19px;background:#a0a0a0"></div>
<div class="a" style="left:1898px;top:943px;width:1px;height:19px;background:#a0a0a0"></div>
<div class="a" style="left:429px;top:924px;width:99px;height:19px;border:1px dotted #222"></div>
<div class="a" style="left:376px;top:962px;width:1523px;height:1px;background:#7a7a7a"></div>
<div class="a" style="left:1899px;top:869px;width:18px;height:94px;background:#f0f0f0;border-left:1px solid #e0e0e0"></div>
<div class="a" style="left:1901px;top:886px;width:14px;height:17px;background:#cdcdcd"></div>
<svg class="a" style="left:1902px;top:872px" width="12" height="8" viewBox="0 0 12 8"><path d="M2 6.5 L6 2.5 L10 6.5" fill="none" stroke="#505050" stroke-width="1.6"/></svg>
<svg class="a" style="left:1902px;top:951px" width="12" height="8" viewBox="0 0 12 8"><path d="M2 1.5 L6 5.5 L10 1.5" fill="none" stroke="#505050" stroke-width="1.6"/></svg>
<div class="a" style="left:372px;top:997px;width:1546px;height:1px;background:#7a7a7a"></div>
<div class="a" style="left:413px;top:982px;width:1390px;height:16px;background:#e8e8e8;border-top:1px solid #7a7a7a;border-bottom:1px solid #7a7a7a"></div>
<div class="a" style="left:372px;top:866px;width:1px;height:132px;background:#7a7a7a"></div>
<div class="t" style="left:376px;top:984px;font-size:11px;letter-spacing:-0.3px;color:#000">Nodes</div>
<div class="a" style="left:412px;top:982px;width:1px;height:16px;background:#7a7a7a"></div>
<div class="t" style="left:417px;top:985px;font-size:11px;letter-spacing:-0.3px;color:#000">Lines</div>
<div class="a" style="left:448px;top:982px;width:1px;height:16px;background:#7a7a7a"></div>
<div class="t" style="left:453px;top:985px;font-size:11px;letter-spacing:-0.3px;color:#000">Materials</div>
<div class="a" style="left:499px;top:982px;width:1px;height:16px;background:#7a7a7a"></div>
<div class="t" style="left:504px;top:985px;font-size:11px;letter-spacing:-0.3px;color:#000">Surfaces</div>
<div class="a" style="left:551px;top:982px;width:1px;height:16px;background:#7a7a7a"></div>
<div class="t" style="left:556px;top:985px;font-size:11px;letter-spacing:-0.3px;color:#000">Solids</div>
<div class="a" style="left:589px;top:982px;width:1px;height:16px;background:#7a7a7a"></div>
<div class="t" style="left:594px;top:985px;font-size:11px;letter-spacing:-0.3px;color:#000">Openings</div>
<div class="a" style="left:644px;top:982px;width:1px;height:16px;background:#7a7a7a"></div>
<div class="t" style="left:649px;top:985px;font-size:11px;letter-spacing:-0.3px;color:#000">Nodal Supports</div>
<div class="a" style="left:727px;top:982px;width:1px;height:16px;background:#7a7a7a"></div>
<div class="t" style="left:732px;top:985px;font-size:11px;letter-spacing:-0.3px;color:#000">Line Supports</div>
<div class="a" style="left:802px;top:982px;width:1px;height:16px;background:#7a7a7a"></div>
<div class="t" style="left:807px;top:985px;font-size:11px;letter-spacing:-0.3px;color:#000">Surface Supports</div>
<div class="a" style="left:894px;top:982px;width:1px;height:16px;background:#7a7a7a"></div>
<div class="t" style="left:899px;top:985px;font-size:11px;letter-spacing:-0.3px;color:#000">Line Hinges</div>
<div class="a" style="left:961px;top:982px;width:1px;height:16px;background:#7a7a7a"></div>
<div class="t" style="left:966px;top:985px;font-size:11px;letter-spacing:-0.3px;color:#000">Cross-Sections</div>
<div class="a" style="left:1040px;top:982px;width:1px;height:16px;background:#7a7a7a"></div>
<div class="t" style="left:1045px;top:985px;font-size:11px;letter-spacing:-0.3px;color:#000">Member Hinges</div>
<div class="a" style="left:1124px;top:982px;width:1px;height:16px;background:#7a7a7a"></div>
<div class="t" style="left:1129px;top:985px;font-size:11px;letter-spacing:-0.3px;color:#000">Member Eccentricities</div>
<div class="a" style="left:1239px;top:982px;width:1px;height:16px;background:#7a7a7a"></div>
<div class="t" style="left:1244px;top:985px;font-size:11px;letter-spacing:-0.3px;color:#000">Member Divisions</div>
<div class="a" style="left:1332px;top:982px;width:1px;height:16px;background:#7a7a7a"></div>
<div class="t" style="left:1337px;top:985px;font-size:11px;letter-spacing:-0.3px;color:#000">Members</div>
<div class="a" style="left:1385px;top:982px;width:1px;height:16px;background:#7a7a7a"></div>
<div class="t" style="left:1390px;top:985px;font-size:11px;letter-spacing:-0.3px;color:#000">Member Elastic Foundations</div>
<div class="a" style="left:1528px;top:982px;width:1px;height:16px;background:#7a7a7a"></div>
<div class="t" style="left:1533px;top:985px;font-size:11px;letter-spacing:-0.3px;color:#000">Member Nonlinearities</div>
<div class="a" style="left:1642px;top:982px;width:1px;height:16px;background:#7a7a7a"></div>
<div class="t" style="left:1647px;top:985px;font-size:11px;letter-spacing:-0.3px;color:#000">Sets of Members</div>
<div class="a" style="left:1732px;top:982px;width:1px;height:16px;background:#7a7a7a"></div>
<div class="t" style="left:1737px;top:985px;font-size:11px;letter-spacing:-0.3px;color:#000">Intersections</div>
<div class="a" style="left:1802px;top:982px;width:1px;height:16px;background:#7a7a7a"></div>
<div class="a" style="left:1856px;top:982px;width:15px;height:16px;background:#f0f0f0;border:1px solid #c0c0c0"></div>
<div class="a" style="left:1872px;top:982px;width:15px;height:16px;background:#f0f0f0;border:1px solid #c0c0c0"></div>
<div class="a" style="left:1888px;top:982px;width:15px;height:16px;background:#f0f0f0;border:1px solid #c0c0c0"></div>
<div class="a" style="left:1904px;top:982px;width:15px;height:16px;background:#f0f0f0;border:1px solid #c0c0c0"></div>
<svg class="a" style="left:1858px;top:985px" width="60" height="10" viewBox="0 0 60 10"><path d="M3 1 V9 M10 1 L5 5 L10 9Z" fill="#aaa" stroke="#aaa"/><path d="M25 1 L20 5 L25 9Z" fill="#aaa"/><path d="M36 1 L41 5 L36 9Z" fill="#111"/><path d="M50 1 L55 5 L50 9Z M57 1 V9" fill="#111" stroke="#111" stroke-width="1.2"/></svg>
<div class="a" style="left:0;top:1018px;width:1920px;height:22px;background:linear-gradient(#eceef2,#d8dce3 45%,#c3c8d1 55%,#c9ced6)"></div>
<div class="a" style="left:0;top:1018px;width:1920px;height:1px;background:#b8bdc6"></div>
<div class="a" style="left:1213px;top:1020px;width:35px;height:18px;border:1px solid #333;border-right-color:#fff;border-bottom-color:#fff"></div>
<div class="t" style="left:1216px;top:1023px;font-size:11.3px;letter-spacing:-0.4px;color:#222">SNAP</div>
<div class="a" style="left:1250px;top:1020px;width:34px;height:18px;border:1px solid #fff;border-right-color:#9aa0aa;border-bottom-color:#9aa0aa"></div>
<div class="t" style="left:1253px;top:1022px;font-size:11.3px;letter-spacing:-0.4px;color:#222">GRID</div>
<div class="a" style="left:1286px;top:1020px;width:50px;height:18px;border:1px solid #333;border-right-color:#fff;border-bottom-color:#fff"></div>
<div class="t" style="left:1289px;top:1023px;font-size:11.3px;letter-spacing:-0.4px;color:#222">ORTHO</div>
<div class="a" style="left:1338px;top:1020px;width:44px;height:18px;border:1px solid #333;border-right-color:#fff;border-bottom-color:#fff"></div>
<div class="t" style="left:1341px;top:1023px;font-size:11.3px;letter-spacing:-0.4px;color:#222">OSNAP</div>
<div class="a" style="left:1384px;top:1020px;width:44px;height:18px;border:1px solid #333;border-right-color:#fff;border-bottom-color:#fff"></div>
<div class="t" style="left:1387px;top:1023px;font-size:11.3px;letter-spacing:-0.4px;color:#222">GLINES</div>
<div class="a" style="left:1430px;top:1020px;width:28px;height:18px;border:1px solid #fff;border-right-color:#9aa0aa;border-bottom-color:#9aa0aa"></div>
<div class="t" style="left:1433px;top:1022px;font-size:11.3px;letter-spacing:-0.4px;color:#222">DXF</div>
<div class="a" style="left:1524px;top:1020px;width:1px;height:18px;background:#a8aeb8;box-shadow:1px 0 0 #fff"></div>
<div class="a" style="left:1612px;top:1020px;width:1px;height:18px;background:#a8aeb8;box-shadow:1px 0 0 #fff"></div>
<div class="a" style="left:1700px;top:1020px;width:1px;height:18px;background:#a8aeb8;box-shadow:1px 0 0 #fff"></div>
<div class="a" style="left:1774px;top:1020px;width:1px;height:18px;background:#a8aeb8;box-shadow:1px 0 0 #fff"></div>
<div class="a" style="left:1848px;top:1020px;width:1px;height:18px;background:#a8aeb8;box-shadow:1px 0 0 #fff"></div>
<div class="a" style="left:439px;top:48px;width:184px;height:336px;background:rgba(0,0,0,0.35)"></div>
<div class="a" style="left:436px;top:45px;width:184px;height:336px;background:#fafafa;border:1px solid #979797"></div>
<div class="a" style="left:437px;top:46px;width:26px;height:334px;background:#e9edf6;border-right:1px solid #c5c9d2"></div>
<svg class="a" style="left:442px;top:48px" width="20" height="20" viewBox="0 0 20 20"><rect x="11.5" y="1.5" width="6" height="3" rx="1" fill="none" stroke="#888"/><rect x="11.5" y="7.5" width="6" height="3" rx="1" fill="none" stroke="#888"/><rect x="11.5" y="13.5" width="6" height="3" rx="1" fill="none" stroke="#888"/><rect x="3" y="9" width="6" height="4" fill="#e87070"/><path d="M11 3 Q7 3 5 8" stroke="#888" fill="none"/></svg>
<div class="t" style="left:468px;top:51px;font-size:11.8px;color:#a8a8a8">Current Module</div>
<div class="a" style="left:469px;top:71px;width:148px;height:1px;background:#c8c8c8"></div>
<div class="t" style="left:468px;top:81px;font-size:11.6px;color:#20203a">Design - Steel</div>
<div class="a" style="left:611px;top:82px;width:0;height:0;border-top:4px solid transparent;border-bottom:4px solid transparent;border-left:4px solid #353a46"></div>
<div class="t" style="left:468px;top:103px;font-size:11.6px;color:#20203a">Design - Concrete</div>
<div class="a" style="left:611px;top:104px;width:0;height:0;border-top:4px solid transparent;border-bottom:4px solid transparent;border-left:4px solid #353a46"></div>
<div class="t" style="left:468px;top:125px;font-size:11.6px;color:#20203a">Design - Timber</div>
<div class="a" style="left:611px;top:126px;width:0;height:0;border-top:4px solid transparent;border-bottom:4px solid transparent;border-left:4px solid #353a46"></div>
<div class="t" style="left:468px;top:147px;font-size:11.6px;color:#20203a">Design - Aluminum</div>
<div class="a" style="left:611px;top:148px;width:0;height:0;border-top:4px solid transparent;border-bottom:4px solid transparent;border-left:4px solid #353a46"></div>
<div class="t" style="left:468px;top:169px;font-size:11.6px;color:#20203a">Dynamic</div>
<div class="a" style="left:611px;top:170px;width:0;height:0;border-top:4px solid transparent;border-bottom:4px solid transparent;border-left:4px solid #353a46"></div>
<div class="t" style="left:468px;top:191px;font-size:11.6px;color:#20203a">Connections</div>
<div class="a" style="left:611px;top:192px;width:0;height:0;border-top:4px solid transparent;border-bottom:4px solid transparent;border-left:4px solid #353a46"></div>
<div class="t" style="left:468px;top:213px;font-size:11.6px;color:#20203a">Foundations</div>
<div class="a" style="left:611px;top:214px;width:0;height:0;border-top:4px solid transparent;border-bottom:4px solid transparent;border-left:4px solid #353a46"></div>
<div class="t" style="left:468px;top:235px;font-size:11.6px;color:#20203a">Stability</div>
<div class="a" style="left:611px;top:236px;width:0;height:0;border-top:4px solid transparent;border-bottom:4px solid transparent;border-left:4px solid #353a46"></div>
<div class="t" style="left:468px;top:257px;font-size:11.6px;color:#20203a">Towers</div>
<div class="a" style="left:611px;top:258px;width:0;height:0;border-top:4px solid transparent;border-bottom:4px solid transparent;border-left:4px solid #353a46"></div>
<div class="t" style="left:468px;top:279px;font-size:11.6px;color:#20203a">Piping</div>
<div class="a" style="left:611px;top:280px;width:0;height:0;border-top:4px solid transparent;border-bottom:4px solid transparent;border-left:4px solid #353a46"></div>
<div class="t" style="left:468px;top:301px;font-size:11.6px;color:#20203a">Others</div>
<div class="a" style="left:611px;top:302px;width:0;height:0;border-top:4px solid transparent;border-bottom:4px solid transparent;border-left:4px solid #353a46"></div>
<div class="a" style="left:469px;top:322px;width:148px;height:1px;background:#c8c8c8"></div>
<div class="a" style="left:442px;top:327px;width:174px;height:18px;background:linear-gradient(#fffef6 0%,#fdf2cc 45%,#f9d56a 52%,#f8d060 85%,#fbe08e 100%);border-radius:3px"></div>
<div class="t" style="left:468px;top:331px;font-size:11.3px;color:#20203a">External Modules</div>
<div class="a" style="left:611px;top:332px;width:0;height:0;border-top:4px solid transparent;border-bottom:4px solid transparent;border-left:4px solid #353a46"></div>
<div class="a" style="left:469px;top:352px;width:148px;height:1px;background:#c8c8c8"></div>
<div class="t" style="left:468px;top:361px;font-size:11.3px;color:#20203a">Stand-Alone Programs</div>
<div class="a" style="left:611px;top:362px;width:0;height:0;border-top:4px solid transparent;border-bottom:4px solid transparent;border-left:4px solid #353a46"></div>
<div class="a" style="left:436px;top:23px;width:102px;height:23px;border:4px solid #f00000;border-radius:9px"></div>
<div class="a" style="left:437px;top:323px;width:183px;height:26px;border:4px solid #f00000;border-radius:9px"></div>
<div class="a" style="left:622px;top:327px;width:368px;height:71px;background:rgba(0,0,0,0.35)"></div>
<div class="a" style="left:619px;top:324px;width:368px;height:71px;background:#fafafa;border:1px solid #979797"></div>
<div class="a" style="left:620px;top:325px;width:26px;height:69px;background:#e9edf6;border-right:1px solid #c5c9d2"></div>
<svg class="a" style="left:624px;top:333px" width="18" height="14" viewBox="0 0 18 14"><rect x="1" y="2" width="16" height="7" fill="#dde" stroke="#556" stroke-width="0.8"/><path d="M3 5 Q9 9 15 5" stroke="#3a50a0" stroke-width="1.2" fill="none"/><path d="M3 13 L4.5 10 L6 13Z M12 13 L13.5 10 L15 13Z" fill="#20a040"/></svg>
<div class="t" style="left:651px;top:333px;font-size:10.6px;color:#20203a">RF-TENDON</div>
<div class="t" style="left:765px;top:333px;font-size:11.4px;color:#20203a">Design of prestressed concrete members</div>
<div class="t" style="left:651px;top:355px;font-size:11.4px;color:#20203a">Idea BEAM</div>
<div class="t" style="left:910px;top:355px;font-size:10.7px;color:#20203a">IDEA StatiCa</div>
<div class="t" style="left:651px;top:376px;font-size:11.6px;color:#20203a">Idea Conection</div>
<div class="t" style="left:910px;top:377px;font-size:10.7px;color:#20203a">IDEA StatiCa</div>
<div class="a" style="left:645px;top:347px;width:340px;height:25px;border:4px solid #f00000;border-radius:9px"></div>
</body></html>
